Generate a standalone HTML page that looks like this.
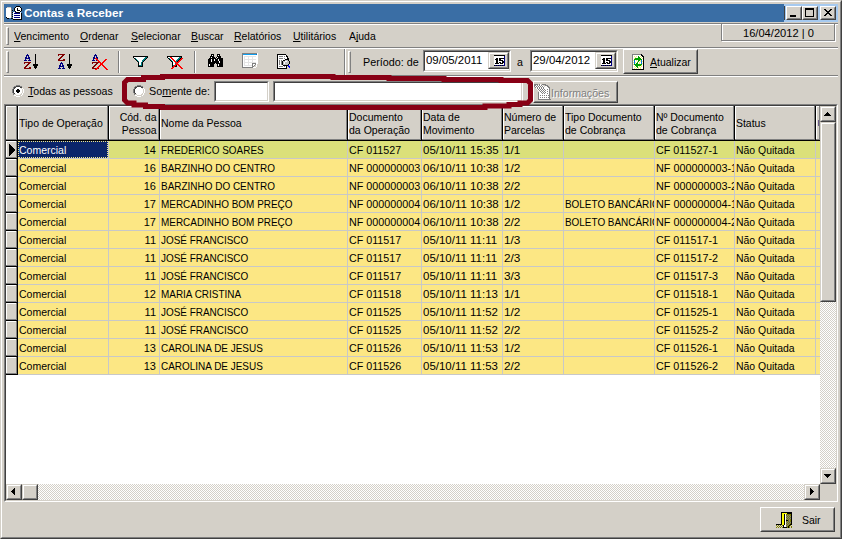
<!DOCTYPE html>
<html><head><meta charset="utf-8">
<style>
*{margin:0;padding:0;box-sizing:border-box}
html,body{width:842px;height:539px;overflow:hidden;background:#D4D0C8}
body{position:relative;font:11px "Liberation Sans",sans-serif;color:#000}
.a{position:absolute}
.t{position:absolute;white-space:pre;line-height:13px;font-size:11px;transform-origin:0 0}
.u{text-decoration:underline;text-decoration-skip-ink:none}
svg{position:absolute;overflow:visible}
.cl{position:absolute;overflow:hidden;white-space:pre;line-height:13px}
.cl span.s{display:inline-block;transform-origin:0 0}
.cl.r span.s{transform-origin:100% 0}
</style></head><body>
<div class="a" style="left:0px;top:0px;width:842px;height:539px;border-top:1px solid #D4D0C8;border-left:1px solid #D4D0C8;border-right:1px solid #404040;border-bottom:1px solid #404040"></div>
<div class="a" style="left:1px;top:1px;width:840px;height:537px;border-top:1px solid #FFFFFF;border-left:1px solid #FFFFFF;border-right:1px solid #808080;border-bottom:1px solid #808080"></div>
<div class="a" style="left:4px;top:4px;width:780px;height:18px;background:#3A6EA5;"></div>
<div class="a" style="left:784px;top:4px;width:54px;height:18px;background:#A6CAF0;"></div>
<div class="t" style="left:24px;top:7px;transform:scaleX(1.0650);color:#fff;font-weight:bold">Contas a Receber</div>
<svg style="left:6px;top:6px;opacity:1.0" width="16" height="14" shape-rendering="crispEdges"><rect x="10" y="0" width="4" height="1" fill="#000000"/><rect x="1" y="1" width="4" height="1" fill="#D4D0C8"/><rect x="9" y="1" width="1" height="1" fill="#000000"/><rect x="10" y="1" width="4" height="1" fill="#FFFFFF"/><rect x="14" y="1" width="1" height="1" fill="#000000"/><rect x="0" y="2" width="5" height="1" fill="#FFFFFF"/><rect x="5" y="2" width="1" height="1" fill="#808080"/><rect x="8" y="2" width="1" height="1" fill="#000000"/><rect x="9" y="2" width="2" height="1" fill="#FFFFFF"/><rect x="11" y="2" width="1" height="1" fill="#000000"/><rect x="12" y="2" width="3" height="1" fill="#FFFFFF"/><rect x="15" y="2" width="1" height="1" fill="#000000"/><rect x="0" y="3" width="5" height="1" fill="#FFFFFF"/><rect x="5" y="3" width="1" height="1" fill="#808080"/><rect x="8" y="3" width="1" height="1" fill="#000000"/><rect x="9" y="3" width="2" height="1" fill="#FFFFFF"/><rect x="11" y="3" width="1" height="1" fill="#000000"/><rect x="12" y="3" width="3" height="1" fill="#FFFFFF"/><rect x="15" y="3" width="1" height="1" fill="#000000"/><rect x="0" y="4" width="5" height="1" fill="#FFFFFF"/><rect x="5" y="4" width="1" height="1" fill="#808080"/><rect x="6" y="4" width="1" height="1" fill="#000000"/><rect x="8" y="4" width="1" height="1" fill="#000000"/><rect x="9" y="4" width="2" height="1" fill="#FFFFFF"/><rect x="11" y="4" width="3" height="1" fill="#000000"/><rect x="14" y="4" width="1" height="1" fill="#FFFFFF"/><rect x="15" y="4" width="1" height="1" fill="#000000"/><rect x="0" y="5" width="5" height="1" fill="#FFFFFF"/><rect x="5" y="5" width="1" height="1" fill="#808080"/><rect x="9" y="5" width="1" height="1" fill="#000000"/><rect x="10" y="5" width="4" height="1" fill="#FFFFFF"/><rect x="14" y="5" width="1" height="1" fill="#000000"/><rect x="0" y="6" width="5" height="1" fill="#FFFFFF"/><rect x="5" y="6" width="1" height="1" fill="#808080"/><rect x="6" y="6" width="1" height="1" fill="#000000"/><rect x="7" y="6" width="2" height="1" fill="#FFFFFF"/><rect x="9" y="6" width="1" height="1" fill="#000080"/><rect x="10" y="6" width="4" height="1" fill="#000000"/><rect x="14" y="6" width="1" height="1" fill="#FFFFFF"/><rect x="0" y="7" width="5" height="1" fill="#FFFFFF"/><rect x="5" y="7" width="1" height="1" fill="#808080"/><rect x="7" y="7" width="1" height="1" fill="#FFFFFF"/><rect x="8" y="7" width="6" height="1" fill="#000080"/><rect x="14" y="7" width="1" height="1" fill="#FFFFFF"/><rect x="15" y="7" width="1" height="1" fill="#000000"/><rect x="0" y="8" width="5" height="1" fill="#FFFFFF"/><rect x="5" y="8" width="1" height="1" fill="#808080"/><rect x="6" y="8" width="1" height="1" fill="#000000"/><rect x="7" y="8" width="8" height="1" fill="#FFFFFF"/><rect x="15" y="8" width="1" height="1" fill="#000000"/><rect x="0" y="9" width="5" height="1" fill="#FFFFFF"/><rect x="5" y="9" width="1" height="1" fill="#808080"/><rect x="7" y="9" width="1" height="1" fill="#FFFFFF"/><rect x="8" y="9" width="6" height="1" fill="#000080"/><rect x="14" y="9" width="1" height="1" fill="#FFFFFF"/><rect x="15" y="9" width="1" height="1" fill="#000000"/><rect x="0" y="10" width="5" height="1" fill="#FFFFFF"/><rect x="5" y="10" width="1" height="1" fill="#808080"/><rect x="6" y="10" width="1" height="1" fill="#000000"/><rect x="7" y="10" width="8" height="1" fill="#FFFFFF"/><rect x="15" y="10" width="1" height="1" fill="#000000"/><rect x="0" y="11" width="1" height="1" fill="#000000"/><rect x="1" y="11" width="4" height="1" fill="#FFFFFF"/><rect x="5" y="11" width="1" height="1" fill="#808080"/><rect x="7" y="11" width="1" height="1" fill="#FFFFFF"/><rect x="8" y="11" width="6" height="1" fill="#000080"/><rect x="14" y="11" width="1" height="1" fill="#FFFFFF"/><rect x="15" y="11" width="1" height="1" fill="#000000"/><rect x="1" y="12" width="2" height="1" fill="#000000"/><rect x="5" y="12" width="2" height="1" fill="#000000"/><rect x="7" y="12" width="8" height="1" fill="#FFFFFF"/><rect x="15" y="12" width="1" height="1" fill="#000000"/><rect x="7" y="13" width="9" height="1" fill="#000000"/></svg>
<div class="a" style="left:786px;top:6px;width:16px;height:14px;background:#D4D0C8;border-top:1px solid #FFFFFF;border-left:1px solid #FFFFFF;border-right:1px solid #404040;border-bottom:1px solid #404040"></div>
<div class="a" style="left:787px;top:7px;width:14px;height:12px;border-top:1px solid #D4D0C8;border-left:1px solid #D4D0C8;border-right:1px solid #808080;border-bottom:1px solid #808080"></div>
<div class="a" style="left:802px;top:6px;width:16px;height:14px;background:#D4D0C8;border-top:1px solid #FFFFFF;border-left:1px solid #FFFFFF;border-right:1px solid #404040;border-bottom:1px solid #404040"></div>
<div class="a" style="left:803px;top:7px;width:14px;height:12px;border-top:1px solid #D4D0C8;border-left:1px solid #D4D0C8;border-right:1px solid #808080;border-bottom:1px solid #808080"></div>
<div class="a" style="left:820px;top:6px;width:16px;height:14px;background:#D4D0C8;border-top:1px solid #FFFFFF;border-left:1px solid #FFFFFF;border-right:1px solid #404040;border-bottom:1px solid #404040"></div>
<div class="a" style="left:821px;top:7px;width:14px;height:12px;border-top:1px solid #D4D0C8;border-left:1px solid #D4D0C8;border-right:1px solid #808080;border-bottom:1px solid #808080"></div>
<div class="a" style="left:784px;top:6px;width:1px;height:14px;background:#404040;"></div>
<svg style="left:790px;top:15px;opacity:1.0" width="6" height="2" shape-rendering="crispEdges"><rect x="0" y="0" width="6" height="1" fill="#000000"/><rect x="0" y="1" width="6" height="1" fill="#000000"/></svg>
<svg style="left:805px;top:8px;opacity:1.0" width="9" height="9" shape-rendering="crispEdges"><rect x="0" y="0" width="9" height="1" fill="#000000"/><rect x="0" y="1" width="9" height="1" fill="#000000"/><rect x="0" y="2" width="1" height="1" fill="#000000"/><rect x="8" y="2" width="1" height="1" fill="#000000"/><rect x="0" y="3" width="1" height="1" fill="#000000"/><rect x="8" y="3" width="1" height="1" fill="#000000"/><rect x="0" y="4" width="1" height="1" fill="#000000"/><rect x="8" y="4" width="1" height="1" fill="#000000"/><rect x="0" y="5" width="1" height="1" fill="#000000"/><rect x="8" y="5" width="1" height="1" fill="#000000"/><rect x="0" y="6" width="1" height="1" fill="#000000"/><rect x="8" y="6" width="1" height="1" fill="#000000"/><rect x="0" y="7" width="1" height="1" fill="#000000"/><rect x="8" y="7" width="1" height="1" fill="#000000"/><rect x="0" y="8" width="9" height="1" fill="#000000"/></svg>
<svg style="left:824px;top:9px;opacity:1.0" width="8" height="7" shape-rendering="crispEdges"><rect x="0" y="0" width="2" height="1" fill="#000000"/><rect x="6" y="0" width="2" height="1" fill="#000000"/><rect x="1" y="1" width="2" height="1" fill="#000000"/><rect x="5" y="1" width="2" height="1" fill="#000000"/><rect x="2" y="2" width="4" height="1" fill="#000000"/><rect x="3" y="3" width="2" height="1" fill="#000000"/><rect x="2" y="4" width="4" height="1" fill="#000000"/><rect x="1" y="5" width="2" height="1" fill="#000000"/><rect x="5" y="5" width="2" height="1" fill="#000000"/><rect x="0" y="6" width="2" height="1" fill="#000000"/><rect x="6" y="6" width="2" height="1" fill="#000000"/></svg>
<div class="a" style="left:4px;top:23px;width:834px;height:1px;background:#808080;"></div>
<div class="a" style="left:4px;top:24px;width:834px;height:1px;background:#FFFFFF;"></div>
<div class="a" style="left:4px;top:47px;width:834px;height:1px;background:#808080;"></div>
<div class="a" style="left:4px;top:48px;width:834px;height:1px;background:#FFFFFF;"></div>
<div class="a" style="left:6px;top:27px;width:3px;height:18px;background:#D4D0C8;border-top:1px solid #FFFFFF;border-left:1px solid #FFFFFF;border-right:1px solid #808080;border-bottom:1px solid #808080"></div>
<div class="t" style="left:14px;top:30px;transform:scaleX(0.9568);"><span class="u">V</span>encimento</div>
<div class="t" style="left:80px;top:30px;transform:scaleX(0.9512);"><span class="u">O</span>rdenar</div>
<div class="t" style="left:131px;top:30px;transform:scaleX(0.9558);"><span class="u">S</span>elecionar</div>
<div class="t" style="left:191px;top:30px;transform:scaleX(0.9511);"><span class="u">B</span>uscar</div>
<div class="t" style="left:234px;top:30px;transform:scaleX(0.9546);"><span class="u">R</span>elatórios</div>
<div class="t" style="left:293px;top:30px;transform:scaleX(0.9536);"><span class="u">U</span>tilitários</div>
<div class="t" style="left:349px;top:30px;transform:scaleX(0.9480);">A<span class="u">j</span>uda</div>
<div class="a" style="left:722px;top:24px;width:114px;height:18px;border-top:1px solid #FFFFFF;border-left:1px solid #FFFFFF;border-right:1px solid #FFFFFF;border-bottom:1px solid #FFFFFF"></div>
<div class="a" style="left:721px;top:23px;width:114px;height:18px;border-top:1px solid #808080;border-left:1px solid #808080;border-right:1px solid #808080;border-bottom:1px solid #808080"></div>
<div class="t" style="left:743px;top:27px;transform:scaleX(1.0099);">16/04/2012 | 0</div>
<div class="a" style="left:4px;top:75px;width:834px;height:1px;background:#808080;"></div>
<div class="a" style="left:4px;top:76px;width:834px;height:1px;background:#FFFFFF;"></div>
<div class="a" style="left:6px;top:51px;width:3px;height:22px;background:#D4D0C8;border-top:1px solid #FFFFFF;border-left:1px solid #FFFFFF;border-right:1px solid #808080;border-bottom:1px solid #808080"></div>
<div class="a" style="left:118px;top:51px;width:1px;height:22px;background:#808080;"></div>
<div class="a" style="left:119px;top:51px;width:1px;height:22px;background:#FFFFFF;"></div>
<div class="a" style="left:194px;top:51px;width:1px;height:22px;background:#808080;"></div>
<div class="a" style="left:195px;top:51px;width:1px;height:22px;background:#FFFFFF;"></div>
<div class="a" style="left:344px;top:49px;width:1px;height:26px;background:#808080;"></div>
<div class="a" style="left:345px;top:49px;width:1px;height:26px;background:#FFFFFF;"></div>
<div class="a" style="left:348px;top:51px;width:3px;height:22px;background:#D4D0C8;border-top:1px solid #FFFFFF;border-left:1px solid #FFFFFF;border-right:1px solid #808080;border-bottom:1px solid #808080"></div>
<div class="t" style="left:363px;top:56px;transform:scaleX(0.9792);">Período: de</div>
<div class="t" style="left:517px;top:56px;transform:scaleX(0.9650);">a</div>
<div class="a" style="left:423px;top:50px;width:88px;height:22px;background:#FFFFFF;border-top:1px solid #808080;border-left:1px solid #808080;border-right:1px solid #FFFFFF;border-bottom:1px solid #FFFFFF"></div>
<div class="a" style="left:424px;top:51px;width:86px;height:20px;border-top:1px solid #404040;border-left:1px solid #404040;border-right:1px solid #D4D0C8;border-bottom:1px solid #D4D0C8"></div>
<div class="t" style="left:426px;top:54px;transform:scaleX(1.0389);">09/05/2011</div>
<div class="a" style="left:488px;top:52px;width:21px;height:17px;background:#D4D0C8;border-top:1px solid #D4D0C8;border-left:1px solid #D4D0C8;border-right:1px solid #404040;border-bottom:1px solid #404040"></div>
<div class="a" style="left:489px;top:53px;width:19px;height:15px;border-top:1px solid #FFFFFF;border-left:1px solid #FFFFFF;border-right:1px solid #808080;border-bottom:1px solid #808080"></div>
<svg style="left:494px;top:55px;opacity:1.0" width="11" height="11" shape-rendering="crispEdges"><rect x="0" y="0" width="11" height="1" fill="#000000"/><rect x="0" y="1" width="10" height="1" fill="#FFFFFF"/><rect x="10" y="1" width="1" height="1" fill="#000080"/><rect x="0" y="2" width="10" height="1" fill="#FFFFFF"/><rect x="10" y="2" width="1" height="1" fill="#000080"/><rect x="0" y="3" width="2" height="1" fill="#FFFFFF"/><rect x="2" y="3" width="2" height="1" fill="#000000"/><rect x="4" y="3" width="1" height="1" fill="#FFFFFF"/><rect x="5" y="3" width="5" height="1" fill="#000000"/><rect x="10" y="3" width="1" height="1" fill="#000080"/><rect x="0" y="4" width="1" height="1" fill="#FFFFFF"/><rect x="1" y="4" width="3" height="1" fill="#000000"/><rect x="4" y="4" width="1" height="1" fill="#FFFFFF"/><rect x="5" y="4" width="2" height="1" fill="#000000"/><rect x="7" y="4" width="3" height="1" fill="#FFFFFF"/><rect x="10" y="4" width="1" height="1" fill="#000080"/><rect x="0" y="5" width="2" height="1" fill="#FFFFFF"/><rect x="2" y="5" width="2" height="1" fill="#000000"/><rect x="4" y="5" width="1" height="1" fill="#FFFFFF"/><rect x="5" y="5" width="4" height="1" fill="#000000"/><rect x="9" y="5" width="1" height="1" fill="#FFFFFF"/><rect x="10" y="5" width="1" height="1" fill="#000080"/><rect x="0" y="6" width="2" height="1" fill="#FFFFFF"/><rect x="2" y="6" width="2" height="1" fill="#000000"/><rect x="4" y="6" width="4" height="1" fill="#FFFFFF"/><rect x="8" y="6" width="2" height="1" fill="#000000"/><rect x="10" y="6" width="1" height="1" fill="#000080"/><rect x="0" y="7" width="2" height="1" fill="#FFFFFF"/><rect x="2" y="7" width="2" height="1" fill="#000000"/><rect x="4" y="7" width="1" height="1" fill="#FFFFFF"/><rect x="5" y="7" width="2" height="1" fill="#000000"/><rect x="7" y="7" width="1" height="1" fill="#FFFFFF"/><rect x="8" y="7" width="2" height="1" fill="#000000"/><rect x="10" y="7" width="1" height="1" fill="#000080"/><rect x="0" y="8" width="1" height="1" fill="#FFFFFF"/><rect x="1" y="8" width="4" height="1" fill="#000000"/><rect x="5" y="8" width="1" height="1" fill="#FFFFFF"/><rect x="6" y="8" width="3" height="1" fill="#000000"/><rect x="9" y="8" width="1" height="1" fill="#FFFFFF"/><rect x="10" y="8" width="1" height="1" fill="#000080"/><rect x="0" y="9" width="10" height="1" fill="#FFFFFF"/><rect x="10" y="9" width="1" height="1" fill="#000080"/><rect x="0" y="10" width="1" height="1" fill="#000000"/><rect x="1" y="10" width="1" height="1" fill="#000080"/><rect x="2" y="10" width="1" height="1" fill="#000000"/><rect x="3" y="10" width="1" height="1" fill="#000080"/><rect x="4" y="10" width="1" height="1" fill="#000000"/><rect x="5" y="10" width="1" height="1" fill="#000080"/><rect x="6" y="10" width="1" height="1" fill="#000000"/><rect x="7" y="10" width="1" height="1" fill="#000080"/><rect x="8" y="10" width="1" height="1" fill="#000000"/><rect x="9" y="10" width="2" height="1" fill="#000080"/></svg>
<div class="a" style="left:530px;top:50px;width:88px;height:22px;background:#FFFFFF;border-top:1px solid #808080;border-left:1px solid #808080;border-right:1px solid #FFFFFF;border-bottom:1px solid #FFFFFF"></div>
<div class="a" style="left:531px;top:51px;width:86px;height:20px;border-top:1px solid #404040;border-left:1px solid #404040;border-right:1px solid #D4D0C8;border-bottom:1px solid #D4D0C8"></div>
<div class="t" style="left:533px;top:54px;transform:scaleX(1.0389);">29/04/2012</div>
<div class="a" style="left:595px;top:52px;width:21px;height:17px;background:#D4D0C8;border-top:1px solid #D4D0C8;border-left:1px solid #D4D0C8;border-right:1px solid #404040;border-bottom:1px solid #404040"></div>
<div class="a" style="left:596px;top:53px;width:19px;height:15px;border-top:1px solid #FFFFFF;border-left:1px solid #FFFFFF;border-right:1px solid #808080;border-bottom:1px solid #808080"></div>
<svg style="left:601px;top:55px;opacity:1.0" width="11" height="11" shape-rendering="crispEdges"><rect x="0" y="0" width="11" height="1" fill="#000000"/><rect x="0" y="1" width="10" height="1" fill="#FFFFFF"/><rect x="10" y="1" width="1" height="1" fill="#000080"/><rect x="0" y="2" width="10" height="1" fill="#FFFFFF"/><rect x="10" y="2" width="1" height="1" fill="#000080"/><rect x="0" y="3" width="2" height="1" fill="#FFFFFF"/><rect x="2" y="3" width="2" height="1" fill="#000000"/><rect x="4" y="3" width="1" height="1" fill="#FFFFFF"/><rect x="5" y="3" width="5" height="1" fill="#000000"/><rect x="10" y="3" width="1" height="1" fill="#000080"/><rect x="0" y="4" width="1" height="1" fill="#FFFFFF"/><rect x="1" y="4" width="3" height="1" fill="#000000"/><rect x="4" y="4" width="1" height="1" fill="#FFFFFF"/><rect x="5" y="4" width="2" height="1" fill="#000000"/><rect x="7" y="4" width="3" height="1" fill="#FFFFFF"/><rect x="10" y="4" width="1" height="1" fill="#000080"/><rect x="0" y="5" width="2" height="1" fill="#FFFFFF"/><rect x="2" y="5" width="2" height="1" fill="#000000"/><rect x="4" y="5" width="1" height="1" fill="#FFFFFF"/><rect x="5" y="5" width="4" height="1" fill="#000000"/><rect x="9" y="5" width="1" height="1" fill="#FFFFFF"/><rect x="10" y="5" width="1" height="1" fill="#000080"/><rect x="0" y="6" width="2" height="1" fill="#FFFFFF"/><rect x="2" y="6" width="2" height="1" fill="#000000"/><rect x="4" y="6" width="4" height="1" fill="#FFFFFF"/><rect x="8" y="6" width="2" height="1" fill="#000000"/><rect x="10" y="6" width="1" height="1" fill="#000080"/><rect x="0" y="7" width="2" height="1" fill="#FFFFFF"/><rect x="2" y="7" width="2" height="1" fill="#000000"/><rect x="4" y="7" width="1" height="1" fill="#FFFFFF"/><rect x="5" y="7" width="2" height="1" fill="#000000"/><rect x="7" y="7" width="1" height="1" fill="#FFFFFF"/><rect x="8" y="7" width="2" height="1" fill="#000000"/><rect x="10" y="7" width="1" height="1" fill="#000080"/><rect x="0" y="8" width="1" height="1" fill="#FFFFFF"/><rect x="1" y="8" width="4" height="1" fill="#000000"/><rect x="5" y="8" width="1" height="1" fill="#FFFFFF"/><rect x="6" y="8" width="3" height="1" fill="#000000"/><rect x="9" y="8" width="1" height="1" fill="#FFFFFF"/><rect x="10" y="8" width="1" height="1" fill="#000080"/><rect x="0" y="9" width="10" height="1" fill="#FFFFFF"/><rect x="10" y="9" width="1" height="1" fill="#000080"/><rect x="0" y="10" width="1" height="1" fill="#000000"/><rect x="1" y="10" width="1" height="1" fill="#000080"/><rect x="2" y="10" width="1" height="1" fill="#000000"/><rect x="3" y="10" width="1" height="1" fill="#000080"/><rect x="4" y="10" width="1" height="1" fill="#000000"/><rect x="5" y="10" width="1" height="1" fill="#000080"/><rect x="6" y="10" width="1" height="1" fill="#000000"/><rect x="7" y="10" width="1" height="1" fill="#000080"/><rect x="8" y="10" width="1" height="1" fill="#000000"/><rect x="9" y="10" width="2" height="1" fill="#000080"/></svg>
<div class="a" style="left:623px;top:49px;width:75px;height:25px;background:#D4D0C8;border-top:1px solid #FFFFFF;border-left:1px solid #FFFFFF;border-right:1px solid #404040;border-bottom:1px solid #404040"></div>
<div class="a" style="left:624px;top:50px;width:73px;height:23px;border-top:1px solid #D4D0C8;border-left:1px solid #D4D0C8;border-right:1px solid #808080;border-bottom:1px solid #808080"></div>
<div class="t" style="left:650px;top:56px;transform:scaleX(0.9539);"><span class="u">A</span>tualizar</div>
<svg style="left:12px;top:85px;opacity:1.0" width="12" height="12" shape-rendering="crispEdges"><rect x="4" y="0" width="4" height="1" fill="#808080"/><rect x="2" y="1" width="2" height="1" fill="#808080"/><rect x="4" y="1" width="4" height="1" fill="#404040"/><rect x="8" y="1" width="2" height="1" fill="#808080"/><rect x="1" y="2" width="1" height="1" fill="#808080"/><rect x="2" y="2" width="2" height="1" fill="#404040"/><rect x="4" y="2" width="4" height="1" fill="#FFFFFF"/><rect x="8" y="2" width="2" height="1" fill="#404040"/><rect x="10" y="2" width="1" height="1" fill="#D4D0C8"/><rect x="1" y="3" width="1" height="1" fill="#808080"/><rect x="2" y="3" width="1" height="1" fill="#404040"/><rect x="3" y="3" width="6" height="1" fill="#FFFFFF"/><rect x="9" y="3" width="1" height="1" fill="#D4D0C8"/><rect x="10" y="3" width="1" height="1" fill="#FFFFFF"/><rect x="0" y="4" width="1" height="1" fill="#808080"/><rect x="1" y="4" width="1" height="1" fill="#404040"/><rect x="2" y="4" width="3" height="1" fill="#FFFFFF"/><rect x="5" y="4" width="2" height="1" fill="#000000"/><rect x="7" y="4" width="3" height="1" fill="#FFFFFF"/><rect x="10" y="4" width="1" height="1" fill="#D4D0C8"/><rect x="11" y="4" width="1" height="1" fill="#FFFFFF"/><rect x="0" y="5" width="1" height="1" fill="#808080"/><rect x="1" y="5" width="1" height="1" fill="#404040"/><rect x="2" y="5" width="2" height="1" fill="#FFFFFF"/><rect x="4" y="5" width="4" height="1" fill="#000000"/><rect x="8" y="5" width="2" height="1" fill="#FFFFFF"/><rect x="10" y="5" width="1" height="1" fill="#D4D0C8"/><rect x="11" y="5" width="1" height="1" fill="#FFFFFF"/><rect x="0" y="6" width="1" height="1" fill="#808080"/><rect x="1" y="6" width="1" height="1" fill="#404040"/><rect x="2" y="6" width="2" height="1" fill="#FFFFFF"/><rect x="4" y="6" width="4" height="1" fill="#000000"/><rect x="8" y="6" width="2" height="1" fill="#FFFFFF"/><rect x="10" y="6" width="1" height="1" fill="#D4D0C8"/><rect x="11" y="6" width="1" height="1" fill="#FFFFFF"/><rect x="0" y="7" width="1" height="1" fill="#808080"/><rect x="1" y="7" width="1" height="1" fill="#404040"/><rect x="2" y="7" width="3" height="1" fill="#FFFFFF"/><rect x="5" y="7" width="2" height="1" fill="#000000"/><rect x="7" y="7" width="3" height="1" fill="#FFFFFF"/><rect x="10" y="7" width="1" height="1" fill="#D4D0C8"/><rect x="11" y="7" width="1" height="1" fill="#FFFFFF"/><rect x="1" y="8" width="1" height="1" fill="#808080"/><rect x="2" y="8" width="1" height="1" fill="#404040"/><rect x="3" y="8" width="6" height="1" fill="#FFFFFF"/><rect x="9" y="8" width="1" height="1" fill="#D4D0C8"/><rect x="10" y="8" width="1" height="1" fill="#FFFFFF"/><rect x="1" y="9" width="1" height="1" fill="#808080"/><rect x="2" y="9" width="2" height="1" fill="#D4D0C8"/><rect x="4" y="9" width="4" height="1" fill="#FFFFFF"/><rect x="8" y="9" width="2" height="1" fill="#D4D0C8"/><rect x="10" y="9" width="1" height="1" fill="#FFFFFF"/><rect x="2" y="10" width="2" height="1" fill="#FFFFFF"/><rect x="4" y="10" width="5" height="1" fill="#D4D0C8"/><rect x="9" y="10" width="1" height="1" fill="#FFFFFF"/><rect x="4" y="11" width="4" height="1" fill="#FFFFFF"/></svg>
<div class="t" style="left:28px;top:85px;transform:scaleX(0.9625);"><span class="u">T</span>odas as pessoas</div>
<svg style="left:133px;top:85px;opacity:1.0" width="12" height="12" shape-rendering="crispEdges"><rect x="4" y="0" width="4" height="1" fill="#808080"/><rect x="2" y="1" width="2" height="1" fill="#808080"/><rect x="4" y="1" width="4" height="1" fill="#404040"/><rect x="8" y="1" width="2" height="1" fill="#808080"/><rect x="1" y="2" width="1" height="1" fill="#808080"/><rect x="2" y="2" width="2" height="1" fill="#404040"/><rect x="4" y="2" width="4" height="1" fill="#FFFFFF"/><rect x="8" y="2" width="2" height="1" fill="#404040"/><rect x="10" y="2" width="1" height="1" fill="#D4D0C8"/><rect x="1" y="3" width="1" height="1" fill="#808080"/><rect x="2" y="3" width="1" height="1" fill="#404040"/><rect x="3" y="3" width="6" height="1" fill="#FFFFFF"/><rect x="9" y="3" width="1" height="1" fill="#D4D0C8"/><rect x="10" y="3" width="1" height="1" fill="#FFFFFF"/><rect x="0" y="4" width="1" height="1" fill="#808080"/><rect x="1" y="4" width="1" height="1" fill="#404040"/><rect x="2" y="4" width="8" height="1" fill="#FFFFFF"/><rect x="10" y="4" width="1" height="1" fill="#D4D0C8"/><rect x="11" y="4" width="1" height="1" fill="#FFFFFF"/><rect x="0" y="5" width="1" height="1" fill="#808080"/><rect x="1" y="5" width="1" height="1" fill="#404040"/><rect x="2" y="5" width="8" height="1" fill="#FFFFFF"/><rect x="10" y="5" width="1" height="1" fill="#D4D0C8"/><rect x="11" y="5" width="1" height="1" fill="#FFFFFF"/><rect x="0" y="6" width="1" height="1" fill="#808080"/><rect x="1" y="6" width="1" height="1" fill="#404040"/><rect x="2" y="6" width="8" height="1" fill="#FFFFFF"/><rect x="10" y="6" width="1" height="1" fill="#D4D0C8"/><rect x="11" y="6" width="1" height="1" fill="#FFFFFF"/><rect x="0" y="7" width="1" height="1" fill="#808080"/><rect x="1" y="7" width="1" height="1" fill="#404040"/><rect x="2" y="7" width="8" height="1" fill="#FFFFFF"/><rect x="10" y="7" width="1" height="1" fill="#D4D0C8"/><rect x="11" y="7" width="1" height="1" fill="#FFFFFF"/><rect x="1" y="8" width="1" height="1" fill="#808080"/><rect x="2" y="8" width="1" height="1" fill="#404040"/><rect x="3" y="8" width="6" height="1" fill="#FFFFFF"/><rect x="9" y="8" width="1" height="1" fill="#D4D0C8"/><rect x="10" y="8" width="1" height="1" fill="#FFFFFF"/><rect x="1" y="9" width="1" height="1" fill="#808080"/><rect x="2" y="9" width="2" height="1" fill="#D4D0C8"/><rect x="4" y="9" width="4" height="1" fill="#FFFFFF"/><rect x="8" y="9" width="2" height="1" fill="#D4D0C8"/><rect x="10" y="9" width="1" height="1" fill="#FFFFFF"/><rect x="2" y="10" width="2" height="1" fill="#FFFFFF"/><rect x="4" y="10" width="5" height="1" fill="#D4D0C8"/><rect x="9" y="10" width="1" height="1" fill="#FFFFFF"/><rect x="4" y="11" width="4" height="1" fill="#FFFFFF"/></svg>
<div class="t" style="left:149px;top:85px;transform:scaleX(0.9780);">So<span class="u">m</span>ente de:</div>
<div class="a" style="left:214px;top:81px;width:55px;height:21px;background:#FFFFFF;border-top:1px solid #808080;border-left:1px solid #808080;border-right:1px solid #FFFFFF;border-bottom:1px solid #FFFFFF"></div>
<div class="a" style="left:215px;top:82px;width:53px;height:19px;border-top:1px solid #404040;border-left:1px solid #404040;border-right:1px solid #D4D0C8;border-bottom:1px solid #D4D0C8"></div>
<div class="a" style="left:273px;top:81px;width:250px;height:21px;background:#FFFFFF;border-top:1px solid #808080;border-left:1px solid #808080;border-right:1px solid #FFFFFF;border-bottom:1px solid #FFFFFF"></div>
<div class="a" style="left:274px;top:82px;width:248px;height:19px;border-top:1px solid #404040;border-left:1px solid #404040;border-right:1px solid #D4D0C8;border-bottom:1px solid #D4D0C8"></div>
<div class="a" style="left:533px;top:81px;width:85px;height:22px;background:#D4D0C8;border-top:1px solid #FFFFFF;border-left:1px solid #FFFFFF;border-right:1px solid #404040;border-bottom:1px solid #404040"></div>
<div class="a" style="left:534px;top:82px;width:83px;height:20px;border-top:1px solid #D4D0C8;border-left:1px solid #D4D0C8;border-right:1px solid #808080;border-bottom:1px solid #808080"></div>
<div class="t" style="left:552px;top:88px;color:#fff;transform:scaleX(0.9617)">Informações</div>
<div class="t" style="left:551px;top:87px;color:#808080;transform:scaleX(0.9617)">Informações</div>
<div class="a" style="left:4px;top:104px;width:834px;height:398px;border-top:1px solid #808080;border-left:1px solid #808080;border-right:1px solid #FFFFFF;border-bottom:1px solid #FFFFFF"></div>
<div class="a" style="left:5px;top:105px;width:832px;height:396px;background:#FFFFFF;border-top:1px solid #404040;border-left:1px solid #404040;border-right:1px solid #D4D0C8;border-bottom:1px solid #D4D0C8"></div>
<div class="a" style="left:6px;top:106px;width:814px;height:34px;background:#D4D0C8;"></div>
<div class="a" style="left:6px;top:106px;width:11px;height:1px;background:#FFFFFF;"></div>
<div class="a" style="left:6px;top:106px;width:1px;height:34px;background:#FFFFFF;"></div>
<div class="a" style="left:6px;top:139px;width:11px;height:1px;background:#808080;"></div>
<div class="a" style="left:16px;top:106px;width:1px;height:34px;background:#808080;"></div>
<div class="a" style="left:18px;top:106px;width:90px;height:1px;background:#FFFFFF;"></div>
<div class="a" style="left:18px;top:106px;width:1px;height:34px;background:#FFFFFF;"></div>
<div class="a" style="left:18px;top:139px;width:90px;height:1px;background:#808080;"></div>
<div class="a" style="left:107px;top:106px;width:1px;height:34px;background:#808080;"></div>
<div class="a" style="left:109px;top:106px;width:50px;height:1px;background:#FFFFFF;"></div>
<div class="a" style="left:109px;top:106px;width:1px;height:34px;background:#FFFFFF;"></div>
<div class="a" style="left:109px;top:139px;width:50px;height:1px;background:#808080;"></div>
<div class="a" style="left:158px;top:106px;width:1px;height:34px;background:#808080;"></div>
<div class="a" style="left:160px;top:106px;width:187px;height:1px;background:#FFFFFF;"></div>
<div class="a" style="left:160px;top:106px;width:1px;height:34px;background:#FFFFFF;"></div>
<div class="a" style="left:160px;top:139px;width:187px;height:1px;background:#808080;"></div>
<div class="a" style="left:346px;top:106px;width:1px;height:34px;background:#808080;"></div>
<div class="a" style="left:348px;top:106px;width:73px;height:1px;background:#FFFFFF;"></div>
<div class="a" style="left:348px;top:106px;width:1px;height:34px;background:#FFFFFF;"></div>
<div class="a" style="left:348px;top:139px;width:73px;height:1px;background:#808080;"></div>
<div class="a" style="left:420px;top:106px;width:1px;height:34px;background:#808080;"></div>
<div class="a" style="left:422px;top:106px;width:80px;height:1px;background:#FFFFFF;"></div>
<div class="a" style="left:422px;top:106px;width:1px;height:34px;background:#FFFFFF;"></div>
<div class="a" style="left:422px;top:139px;width:80px;height:1px;background:#808080;"></div>
<div class="a" style="left:501px;top:106px;width:1px;height:34px;background:#808080;"></div>
<div class="a" style="left:503px;top:106px;width:60px;height:1px;background:#FFFFFF;"></div>
<div class="a" style="left:503px;top:106px;width:1px;height:34px;background:#FFFFFF;"></div>
<div class="a" style="left:503px;top:139px;width:60px;height:1px;background:#808080;"></div>
<div class="a" style="left:562px;top:106px;width:1px;height:34px;background:#808080;"></div>
<div class="a" style="left:564px;top:106px;width:90px;height:1px;background:#FFFFFF;"></div>
<div class="a" style="left:564px;top:106px;width:1px;height:34px;background:#FFFFFF;"></div>
<div class="a" style="left:564px;top:139px;width:90px;height:1px;background:#808080;"></div>
<div class="a" style="left:653px;top:106px;width:1px;height:34px;background:#808080;"></div>
<div class="a" style="left:655px;top:106px;width:79px;height:1px;background:#FFFFFF;"></div>
<div class="a" style="left:655px;top:106px;width:1px;height:34px;background:#FFFFFF;"></div>
<div class="a" style="left:655px;top:139px;width:79px;height:1px;background:#808080;"></div>
<div class="a" style="left:733px;top:106px;width:1px;height:34px;background:#808080;"></div>
<div class="a" style="left:735px;top:106px;width:80px;height:1px;background:#FFFFFF;"></div>
<div class="a" style="left:735px;top:106px;width:1px;height:34px;background:#FFFFFF;"></div>
<div class="a" style="left:735px;top:139px;width:80px;height:1px;background:#808080;"></div>
<div class="a" style="left:814px;top:106px;width:1px;height:34px;background:#808080;"></div>
<div class="a" style="left:816px;top:106px;width:4px;height:1px;background:#FFFFFF;"></div>
<div class="a" style="left:816px;top:106px;width:1px;height:34px;background:#FFFFFF;"></div>
<div class="a" style="left:816px;top:139px;width:4px;height:1px;background:#808080;"></div>
<div class="a" style="left:819px;top:106px;width:1px;height:34px;background:#808080;"></div>
<div class="a" style="left:17px;top:106px;width:1px;height:34px;background:#000;"></div>
<div class="a" style="left:108px;top:106px;width:1px;height:34px;background:#000;"></div>
<div class="a" style="left:159px;top:106px;width:1px;height:34px;background:#000;"></div>
<div class="a" style="left:347px;top:106px;width:1px;height:34px;background:#000;"></div>
<div class="a" style="left:421px;top:106px;width:1px;height:34px;background:#000;"></div>
<div class="a" style="left:502px;top:106px;width:1px;height:34px;background:#000;"></div>
<div class="a" style="left:563px;top:106px;width:1px;height:34px;background:#000;"></div>
<div class="a" style="left:654px;top:106px;width:1px;height:34px;background:#000;"></div>
<div class="a" style="left:734px;top:106px;width:1px;height:34px;background:#000;"></div>
<div class="a" style="left:815px;top:106px;width:1px;height:34px;background:#000;"></div>
<div class="a" style="left:6px;top:140px;width:814px;height:1px;background:#000;"></div>
<div class="cl" style="left:18px;top:106px;width:89px;height:33px;padding:11px 0 0 1px;color:#000;"><span class="s" style="transform:scaleX(0.9562)">Tipo de Operação</span></div>
<div class="cl r" style="left:109px;top:106px;width:49px;height:33px;padding:5px 1px 0 0;text-align:right;color:#000;"><span class="s" style="transform:scaleX(0.9572)">Cód. da</span></div>
<div class="cl r" style="left:109px;top:106px;width:49px;height:33px;padding:18px 1px 0 0;text-align:right;color:#000;"><span class="s" style="transform:scaleX(0.9520)">Pessoa</span></div>
<div class="cl" style="left:160px;top:106px;width:186px;height:33px;padding:11px 0 0 1px;color:#000;"><span class="s" style="transform:scaleX(0.9558)">Nome da Pessoa</span></div>
<div class="cl" style="left:348px;top:106px;width:72px;height:33px;padding:5px 0 0 1px;color:#000;"><span class="s" style="transform:scaleX(0.9558)">Documento</span></div>
<div class="cl" style="left:348px;top:106px;width:72px;height:33px;padding:18px 0 0 1px;color:#000;"><span class="s" style="transform:scaleX(0.9579)">da Operação</span></div>
<div class="cl" style="left:422px;top:106px;width:79px;height:33px;padding:5px 0 0 1px;color:#000;"><span class="s" style="transform:scaleX(0.9544)">Data de</span></div>
<div class="cl" style="left:422px;top:106px;width:79px;height:33px;padding:18px 0 0 1px;color:#000;"><span class="s" style="transform:scaleX(0.9539)">Movimento</span></div>
<div class="cl" style="left:503px;top:106px;width:59px;height:33px;padding:5px 0 0 1px;color:#000;"><span class="s" style="transform:scaleX(0.9575)">Número de</span></div>
<div class="cl" style="left:503px;top:106px;width:59px;height:33px;padding:18px 0 0 1px;color:#000;"><span class="s" style="transform:scaleX(0.9539)">Parcelas</span></div>
<div class="cl" style="left:564px;top:106px;width:89px;height:33px;padding:5px 0 0 1px;color:#000;"><span class="s" style="transform:scaleX(0.9545)">Tipo Documento</span></div>
<div class="cl" style="left:564px;top:106px;width:89px;height:33px;padding:18px 0 0 1px;color:#000;"><span class="s" style="transform:scaleX(0.9585)">de Cobrança</span></div>
<div class="cl" style="left:655px;top:106px;width:78px;height:33px;padding:5px 0 0 1px;color:#000;"><span class="s" style="transform:scaleX(0.9520)">Nº Documento</span></div>
<div class="cl" style="left:655px;top:106px;width:78px;height:33px;padding:18px 0 0 1px;color:#000;"><span class="s" style="transform:scaleX(0.9585)">de Cobrança</span></div>
<div class="cl" style="left:735px;top:106px;width:79px;height:33px;padding:11px 0 0 1px;color:#000;"><span class="s" style="transform:scaleX(0.9497)">Status</span></div>
<div class="a" style="left:18px;top:141px;width:802px;height:17px;background:#DBE07A;"></div>
<div class="a" style="left:18px;top:158px;width:802px;height:1px;background:#C8C8C8;"></div>
<div class="a" style="left:6px;top:141px;width:11px;height:17px;background:#D4D0C8;"></div>
<div class="a" style="left:6px;top:141px;width:11px;height:1px;background:#FFFFFF;"></div>
<div class="a" style="left:6px;top:141px;width:1px;height:17px;background:#FFFFFF;"></div>
<div class="a" style="left:6px;top:157px;width:11px;height:1px;background:#808080;"></div>
<div class="a" style="left:16px;top:141px;width:1px;height:17px;background:#808080;"></div>
<div class="a" style="left:6px;top:158px;width:12px;height:1px;background:#000;"></div>
<div class="a" style="left:17px;top:141px;width:1px;height:18px;background:#000;"></div>
<div class="a" style="left:18px;top:141px;width:90px;height:17px;background:#0A246A;"></div>
<div class="a" style="left:18px;top:141px;width:90px;height:17px;border:1px dotted #F0E68C"></div>
<div class="cl" style="left:18px;top:141px;width:90px;height:17px;padding:3px 0 0 1px;color:#fff;"><span class="s" style="transform:scaleX(0.9546)">Comercial</span></div>
<div class="cl r" style="left:109px;top:141px;width:50px;height:17px;padding:3px 3px 0 0;text-align:right;color:#000;"><span class="s" style="transform:scaleX(1.0000)">14</span></div>
<div class="cl" style="left:160px;top:141px;width:187px;height:17px;padding:3px 0 0 1px;color:#000;"><span class="s" style="transform:scaleX(0.9027)">FREDERICO SOARES</span></div>
<div class="cl" style="left:348px;top:141px;width:73px;height:17px;padding:3px 0 0 1px;color:#000;"><span class="s" style="transform:scaleX(0.9731)">CF 011527</span></div>
<div class="cl" style="left:422px;top:141px;width:80px;height:17px;padding:3px 0 0 1px;color:#000;"><span class="s" style="transform:scaleX(1.0437)">05/10/11 15:35</span></div>
<div class="cl" style="left:503px;top:141px;width:60px;height:17px;padding:3px 0 0 1px;color:#000;"><span class="s" style="transform:scaleX(1.0700)">1/1</span></div>
<div class="cl" style="left:655px;top:141px;width:79px;height:17px;padding:3px 0 0 1px;color:#000;"><span class="s" style="transform:scaleX(0.9772)">CF 011527-1</span></div>
<div class="cl" style="left:735px;top:141px;width:80px;height:17px;padding:3px 0 0 1px;color:#000;"><span class="s" style="transform:scaleX(0.9494)">Não Quitada</span></div>
<div class="a" style="left:18px;top:159px;width:802px;height:17px;background:#FCE784;"></div>
<div class="a" style="left:18px;top:176px;width:802px;height:1px;background:#C8C8C8;"></div>
<div class="a" style="left:6px;top:159px;width:11px;height:17px;background:#D4D0C8;"></div>
<div class="a" style="left:6px;top:159px;width:11px;height:1px;background:#FFFFFF;"></div>
<div class="a" style="left:6px;top:159px;width:1px;height:17px;background:#FFFFFF;"></div>
<div class="a" style="left:6px;top:175px;width:11px;height:1px;background:#808080;"></div>
<div class="a" style="left:16px;top:159px;width:1px;height:17px;background:#808080;"></div>
<div class="a" style="left:6px;top:176px;width:12px;height:1px;background:#000;"></div>
<div class="a" style="left:17px;top:159px;width:1px;height:18px;background:#000;"></div>
<div class="cl" style="left:18px;top:159px;width:90px;height:17px;padding:3px 0 0 1px;color:#000;"><span class="s" style="transform:scaleX(0.9546)">Comercial</span></div>
<div class="cl r" style="left:109px;top:159px;width:50px;height:17px;padding:3px 3px 0 0;text-align:right;color:#000;"><span class="s" style="transform:scaleX(1.0000)">16</span></div>
<div class="cl" style="left:160px;top:159px;width:187px;height:17px;padding:3px 0 0 1px;color:#000;"><span class="s" style="transform:scaleX(0.9049)">BARZINHO DO CENTRO</span></div>
<div class="cl" style="left:348px;top:159px;width:73px;height:17px;padding:3px 0 0 1px;color:#000;"><span class="s" style="transform:scaleX(0.9799)">NF 000000003</span></div>
<div class="cl" style="left:422px;top:159px;width:80px;height:17px;padding:3px 0 0 1px;color:#000;"><span class="s" style="transform:scaleX(1.0437)">06/10/11 10:38</span></div>
<div class="cl" style="left:503px;top:159px;width:60px;height:17px;padding:3px 0 0 1px;color:#000;"><span class="s" style="transform:scaleX(1.0700)">1/2</span></div>
<div class="cl" style="left:655px;top:159px;width:79px;height:17px;padding:3px 0 0 1px;color:#000;"><span class="s" style="transform:scaleX(0.9823)">NF 000000003-1</span></div>
<div class="cl" style="left:735px;top:159px;width:80px;height:17px;padding:3px 0 0 1px;color:#000;"><span class="s" style="transform:scaleX(0.9494)">Não Quitada</span></div>
<div class="a" style="left:18px;top:177px;width:802px;height:17px;background:#FCE784;"></div>
<div class="a" style="left:18px;top:194px;width:802px;height:1px;background:#C8C8C8;"></div>
<div class="a" style="left:6px;top:177px;width:11px;height:17px;background:#D4D0C8;"></div>
<div class="a" style="left:6px;top:177px;width:11px;height:1px;background:#FFFFFF;"></div>
<div class="a" style="left:6px;top:177px;width:1px;height:17px;background:#FFFFFF;"></div>
<div class="a" style="left:6px;top:193px;width:11px;height:1px;background:#808080;"></div>
<div class="a" style="left:16px;top:177px;width:1px;height:17px;background:#808080;"></div>
<div class="a" style="left:6px;top:194px;width:12px;height:1px;background:#000;"></div>
<div class="a" style="left:17px;top:177px;width:1px;height:18px;background:#000;"></div>
<div class="cl" style="left:18px;top:177px;width:90px;height:17px;padding:3px 0 0 1px;color:#000;"><span class="s" style="transform:scaleX(0.9546)">Comercial</span></div>
<div class="cl r" style="left:109px;top:177px;width:50px;height:17px;padding:3px 3px 0 0;text-align:right;color:#000;"><span class="s" style="transform:scaleX(1.0000)">16</span></div>
<div class="cl" style="left:160px;top:177px;width:187px;height:17px;padding:3px 0 0 1px;color:#000;"><span class="s" style="transform:scaleX(0.9049)">BARZINHO DO CENTRO</span></div>
<div class="cl" style="left:348px;top:177px;width:73px;height:17px;padding:3px 0 0 1px;color:#000;"><span class="s" style="transform:scaleX(0.9799)">NF 000000003</span></div>
<div class="cl" style="left:422px;top:177px;width:80px;height:17px;padding:3px 0 0 1px;color:#000;"><span class="s" style="transform:scaleX(1.0437)">06/10/11 10:38</span></div>
<div class="cl" style="left:503px;top:177px;width:60px;height:17px;padding:3px 0 0 1px;color:#000;"><span class="s" style="transform:scaleX(1.0700)">2/2</span></div>
<div class="cl" style="left:655px;top:177px;width:79px;height:17px;padding:3px 0 0 1px;color:#000;"><span class="s" style="transform:scaleX(0.9823)">NF 000000003-2</span></div>
<div class="cl" style="left:735px;top:177px;width:80px;height:17px;padding:3px 0 0 1px;color:#000;"><span class="s" style="transform:scaleX(0.9494)">Não Quitada</span></div>
<div class="a" style="left:18px;top:195px;width:802px;height:17px;background:#FCE784;"></div>
<div class="a" style="left:18px;top:212px;width:802px;height:1px;background:#C8C8C8;"></div>
<div class="a" style="left:6px;top:195px;width:11px;height:17px;background:#D4D0C8;"></div>
<div class="a" style="left:6px;top:195px;width:11px;height:1px;background:#FFFFFF;"></div>
<div class="a" style="left:6px;top:195px;width:1px;height:17px;background:#FFFFFF;"></div>
<div class="a" style="left:6px;top:211px;width:11px;height:1px;background:#808080;"></div>
<div class="a" style="left:16px;top:195px;width:1px;height:17px;background:#808080;"></div>
<div class="a" style="left:6px;top:212px;width:12px;height:1px;background:#000;"></div>
<div class="a" style="left:17px;top:195px;width:1px;height:18px;background:#000;"></div>
<div class="cl" style="left:18px;top:195px;width:90px;height:17px;padding:3px 0 0 1px;color:#000;"><span class="s" style="transform:scaleX(0.9546)">Comercial</span></div>
<div class="cl r" style="left:109px;top:195px;width:50px;height:17px;padding:3px 3px 0 0;text-align:right;color:#000;"><span class="s" style="transform:scaleX(1.0000)">17</span></div>
<div class="cl" style="left:160px;top:195px;width:187px;height:17px;padding:3px 0 0 1px;color:#000;"><span class="s" style="transform:scaleX(0.9042)">MERCADINHO BOM PREÇO</span></div>
<div class="cl" style="left:348px;top:195px;width:73px;height:17px;padding:3px 0 0 1px;color:#000;"><span class="s" style="transform:scaleX(0.9799)">NF 000000004</span></div>
<div class="cl" style="left:422px;top:195px;width:80px;height:17px;padding:3px 0 0 1px;color:#000;"><span class="s" style="transform:scaleX(1.0437)">06/10/11 10:38</span></div>
<div class="cl" style="left:503px;top:195px;width:60px;height:17px;padding:3px 0 0 1px;color:#000;"><span class="s" style="transform:scaleX(1.0700)">1/2</span></div>
<div class="cl" style="left:564px;top:195px;width:90px;height:17px;padding:3px 0 0 1px;color:#000;"><span class="s" style="transform:scaleX(0.9029)">BOLETO BANCÁRIO</span></div>
<div class="cl" style="left:655px;top:195px;width:79px;height:17px;padding:3px 0 0 1px;color:#000;"><span class="s" style="transform:scaleX(0.9823)">NF 000000004-1</span></div>
<div class="cl" style="left:735px;top:195px;width:80px;height:17px;padding:3px 0 0 1px;color:#000;"><span class="s" style="transform:scaleX(0.9494)">Não Quitada</span></div>
<div class="a" style="left:18px;top:213px;width:802px;height:17px;background:#FCE784;"></div>
<div class="a" style="left:18px;top:230px;width:802px;height:1px;background:#C8C8C8;"></div>
<div class="a" style="left:6px;top:213px;width:11px;height:17px;background:#D4D0C8;"></div>
<div class="a" style="left:6px;top:213px;width:11px;height:1px;background:#FFFFFF;"></div>
<div class="a" style="left:6px;top:213px;width:1px;height:17px;background:#FFFFFF;"></div>
<div class="a" style="left:6px;top:229px;width:11px;height:1px;background:#808080;"></div>
<div class="a" style="left:16px;top:213px;width:1px;height:17px;background:#808080;"></div>
<div class="a" style="left:6px;top:230px;width:12px;height:1px;background:#000;"></div>
<div class="a" style="left:17px;top:213px;width:1px;height:18px;background:#000;"></div>
<div class="cl" style="left:18px;top:213px;width:90px;height:17px;padding:3px 0 0 1px;color:#000;"><span class="s" style="transform:scaleX(0.9546)">Comercial</span></div>
<div class="cl r" style="left:109px;top:213px;width:50px;height:17px;padding:3px 3px 0 0;text-align:right;color:#000;"><span class="s" style="transform:scaleX(1.0000)">17</span></div>
<div class="cl" style="left:160px;top:213px;width:187px;height:17px;padding:3px 0 0 1px;color:#000;"><span class="s" style="transform:scaleX(0.9042)">MERCADINHO BOM PREÇO</span></div>
<div class="cl" style="left:348px;top:213px;width:73px;height:17px;padding:3px 0 0 1px;color:#000;"><span class="s" style="transform:scaleX(0.9799)">NF 000000004</span></div>
<div class="cl" style="left:422px;top:213px;width:80px;height:17px;padding:3px 0 0 1px;color:#000;"><span class="s" style="transform:scaleX(1.0437)">06/10/11 10:38</span></div>
<div class="cl" style="left:503px;top:213px;width:60px;height:17px;padding:3px 0 0 1px;color:#000;"><span class="s" style="transform:scaleX(1.0700)">2/2</span></div>
<div class="cl" style="left:564px;top:213px;width:90px;height:17px;padding:3px 0 0 1px;color:#000;"><span class="s" style="transform:scaleX(0.9029)">BOLETO BANCÁRIO</span></div>
<div class="cl" style="left:655px;top:213px;width:79px;height:17px;padding:3px 0 0 1px;color:#000;"><span class="s" style="transform:scaleX(0.9823)">NF 000000004-2</span></div>
<div class="cl" style="left:735px;top:213px;width:80px;height:17px;padding:3px 0 0 1px;color:#000;"><span class="s" style="transform:scaleX(0.9494)">Não Quitada</span></div>
<div class="a" style="left:18px;top:231px;width:802px;height:17px;background:#FCE784;"></div>
<div class="a" style="left:18px;top:248px;width:802px;height:1px;background:#C8C8C8;"></div>
<div class="a" style="left:6px;top:231px;width:11px;height:17px;background:#D4D0C8;"></div>
<div class="a" style="left:6px;top:231px;width:11px;height:1px;background:#FFFFFF;"></div>
<div class="a" style="left:6px;top:231px;width:1px;height:17px;background:#FFFFFF;"></div>
<div class="a" style="left:6px;top:247px;width:11px;height:1px;background:#808080;"></div>
<div class="a" style="left:16px;top:231px;width:1px;height:17px;background:#808080;"></div>
<div class="a" style="left:6px;top:248px;width:12px;height:1px;background:#000;"></div>
<div class="a" style="left:17px;top:231px;width:1px;height:18px;background:#000;"></div>
<div class="cl" style="left:18px;top:231px;width:90px;height:17px;padding:3px 0 0 1px;color:#000;"><span class="s" style="transform:scaleX(0.9546)">Comercial</span></div>
<div class="cl r" style="left:109px;top:231px;width:50px;height:17px;padding:3px 3px 0 0;text-align:right;color:#000;"><span class="s" style="transform:scaleX(1.0000)">11</span></div>
<div class="cl" style="left:160px;top:231px;width:187px;height:17px;padding:3px 0 0 1px;color:#000;"><span class="s" style="transform:scaleX(0.9032)">JOSÉ FRANCISCO</span></div>
<div class="cl" style="left:348px;top:231px;width:73px;height:17px;padding:3px 0 0 1px;color:#000;"><span class="s" style="transform:scaleX(0.9731)">CF 011517</span></div>
<div class="cl" style="left:422px;top:231px;width:80px;height:17px;padding:3px 0 0 1px;color:#000;"><span class="s" style="transform:scaleX(1.0437)">05/10/11 11:11</span></div>
<div class="cl" style="left:503px;top:231px;width:60px;height:17px;padding:3px 0 0 1px;color:#000;"><span class="s" style="transform:scaleX(1.0700)">1/3</span></div>
<div class="cl" style="left:655px;top:231px;width:79px;height:17px;padding:3px 0 0 1px;color:#000;"><span class="s" style="transform:scaleX(0.9772)">CF 011517-1</span></div>
<div class="cl" style="left:735px;top:231px;width:80px;height:17px;padding:3px 0 0 1px;color:#000;"><span class="s" style="transform:scaleX(0.9494)">Não Quitada</span></div>
<div class="a" style="left:18px;top:249px;width:802px;height:17px;background:#FCE784;"></div>
<div class="a" style="left:18px;top:266px;width:802px;height:1px;background:#C8C8C8;"></div>
<div class="a" style="left:6px;top:249px;width:11px;height:17px;background:#D4D0C8;"></div>
<div class="a" style="left:6px;top:249px;width:11px;height:1px;background:#FFFFFF;"></div>
<div class="a" style="left:6px;top:249px;width:1px;height:17px;background:#FFFFFF;"></div>
<div class="a" style="left:6px;top:265px;width:11px;height:1px;background:#808080;"></div>
<div class="a" style="left:16px;top:249px;width:1px;height:17px;background:#808080;"></div>
<div class="a" style="left:6px;top:266px;width:12px;height:1px;background:#000;"></div>
<div class="a" style="left:17px;top:249px;width:1px;height:18px;background:#000;"></div>
<div class="cl" style="left:18px;top:249px;width:90px;height:17px;padding:3px 0 0 1px;color:#000;"><span class="s" style="transform:scaleX(0.9546)">Comercial</span></div>
<div class="cl r" style="left:109px;top:249px;width:50px;height:17px;padding:3px 3px 0 0;text-align:right;color:#000;"><span class="s" style="transform:scaleX(1.0000)">11</span></div>
<div class="cl" style="left:160px;top:249px;width:187px;height:17px;padding:3px 0 0 1px;color:#000;"><span class="s" style="transform:scaleX(0.9032)">JOSÉ FRANCISCO</span></div>
<div class="cl" style="left:348px;top:249px;width:73px;height:17px;padding:3px 0 0 1px;color:#000;"><span class="s" style="transform:scaleX(0.9731)">CF 011517</span></div>
<div class="cl" style="left:422px;top:249px;width:80px;height:17px;padding:3px 0 0 1px;color:#000;"><span class="s" style="transform:scaleX(1.0437)">05/10/11 11:11</span></div>
<div class="cl" style="left:503px;top:249px;width:60px;height:17px;padding:3px 0 0 1px;color:#000;"><span class="s" style="transform:scaleX(1.0700)">2/3</span></div>
<div class="cl" style="left:655px;top:249px;width:79px;height:17px;padding:3px 0 0 1px;color:#000;"><span class="s" style="transform:scaleX(0.9772)">CF 011517-2</span></div>
<div class="cl" style="left:735px;top:249px;width:80px;height:17px;padding:3px 0 0 1px;color:#000;"><span class="s" style="transform:scaleX(0.9494)">Não Quitada</span></div>
<div class="a" style="left:18px;top:267px;width:802px;height:17px;background:#FCE784;"></div>
<div class="a" style="left:18px;top:284px;width:802px;height:1px;background:#C8C8C8;"></div>
<div class="a" style="left:6px;top:267px;width:11px;height:17px;background:#D4D0C8;"></div>
<div class="a" style="left:6px;top:267px;width:11px;height:1px;background:#FFFFFF;"></div>
<div class="a" style="left:6px;top:267px;width:1px;height:17px;background:#FFFFFF;"></div>
<div class="a" style="left:6px;top:283px;width:11px;height:1px;background:#808080;"></div>
<div class="a" style="left:16px;top:267px;width:1px;height:17px;background:#808080;"></div>
<div class="a" style="left:6px;top:284px;width:12px;height:1px;background:#000;"></div>
<div class="a" style="left:17px;top:267px;width:1px;height:18px;background:#000;"></div>
<div class="cl" style="left:18px;top:267px;width:90px;height:17px;padding:3px 0 0 1px;color:#000;"><span class="s" style="transform:scaleX(0.9546)">Comercial</span></div>
<div class="cl r" style="left:109px;top:267px;width:50px;height:17px;padding:3px 3px 0 0;text-align:right;color:#000;"><span class="s" style="transform:scaleX(1.0000)">11</span></div>
<div class="cl" style="left:160px;top:267px;width:187px;height:17px;padding:3px 0 0 1px;color:#000;"><span class="s" style="transform:scaleX(0.9032)">JOSÉ FRANCISCO</span></div>
<div class="cl" style="left:348px;top:267px;width:73px;height:17px;padding:3px 0 0 1px;color:#000;"><span class="s" style="transform:scaleX(0.9731)">CF 011517</span></div>
<div class="cl" style="left:422px;top:267px;width:80px;height:17px;padding:3px 0 0 1px;color:#000;"><span class="s" style="transform:scaleX(1.0437)">05/10/11 11:11</span></div>
<div class="cl" style="left:503px;top:267px;width:60px;height:17px;padding:3px 0 0 1px;color:#000;"><span class="s" style="transform:scaleX(1.0700)">3/3</span></div>
<div class="cl" style="left:655px;top:267px;width:79px;height:17px;padding:3px 0 0 1px;color:#000;"><span class="s" style="transform:scaleX(0.9772)">CF 011517-3</span></div>
<div class="cl" style="left:735px;top:267px;width:80px;height:17px;padding:3px 0 0 1px;color:#000;"><span class="s" style="transform:scaleX(0.9494)">Não Quitada</span></div>
<div class="a" style="left:18px;top:285px;width:802px;height:17px;background:#FCE784;"></div>
<div class="a" style="left:18px;top:302px;width:802px;height:1px;background:#C8C8C8;"></div>
<div class="a" style="left:6px;top:285px;width:11px;height:17px;background:#D4D0C8;"></div>
<div class="a" style="left:6px;top:285px;width:11px;height:1px;background:#FFFFFF;"></div>
<div class="a" style="left:6px;top:285px;width:1px;height:17px;background:#FFFFFF;"></div>
<div class="a" style="left:6px;top:301px;width:11px;height:1px;background:#808080;"></div>
<div class="a" style="left:16px;top:285px;width:1px;height:17px;background:#808080;"></div>
<div class="a" style="left:6px;top:302px;width:12px;height:1px;background:#000;"></div>
<div class="a" style="left:17px;top:285px;width:1px;height:18px;background:#000;"></div>
<div class="cl" style="left:18px;top:285px;width:90px;height:17px;padding:3px 0 0 1px;color:#000;"><span class="s" style="transform:scaleX(0.9546)">Comercial</span></div>
<div class="cl r" style="left:109px;top:285px;width:50px;height:17px;padding:3px 3px 0 0;text-align:right;color:#000;"><span class="s" style="transform:scaleX(1.0000)">12</span></div>
<div class="cl" style="left:160px;top:285px;width:187px;height:17px;padding:3px 0 0 1px;color:#000;"><span class="s" style="transform:scaleX(0.9034)">MARIA CRISTINA</span></div>
<div class="cl" style="left:348px;top:285px;width:73px;height:17px;padding:3px 0 0 1px;color:#000;"><span class="s" style="transform:scaleX(0.9731)">CF 011518</span></div>
<div class="cl" style="left:422px;top:285px;width:80px;height:17px;padding:3px 0 0 1px;color:#000;"><span class="s" style="transform:scaleX(1.0437)">05/10/11 11:13</span></div>
<div class="cl" style="left:503px;top:285px;width:60px;height:17px;padding:3px 0 0 1px;color:#000;"><span class="s" style="transform:scaleX(1.0700)">1/1</span></div>
<div class="cl" style="left:655px;top:285px;width:79px;height:17px;padding:3px 0 0 1px;color:#000;"><span class="s" style="transform:scaleX(0.9772)">CF 011518-1</span></div>
<div class="cl" style="left:735px;top:285px;width:80px;height:17px;padding:3px 0 0 1px;color:#000;"><span class="s" style="transform:scaleX(0.9494)">Não Quitada</span></div>
<div class="a" style="left:18px;top:303px;width:802px;height:17px;background:#FCE784;"></div>
<div class="a" style="left:18px;top:320px;width:802px;height:1px;background:#C8C8C8;"></div>
<div class="a" style="left:6px;top:303px;width:11px;height:17px;background:#D4D0C8;"></div>
<div class="a" style="left:6px;top:303px;width:11px;height:1px;background:#FFFFFF;"></div>
<div class="a" style="left:6px;top:303px;width:1px;height:17px;background:#FFFFFF;"></div>
<div class="a" style="left:6px;top:319px;width:11px;height:1px;background:#808080;"></div>
<div class="a" style="left:16px;top:303px;width:1px;height:17px;background:#808080;"></div>
<div class="a" style="left:6px;top:320px;width:12px;height:1px;background:#000;"></div>
<div class="a" style="left:17px;top:303px;width:1px;height:18px;background:#000;"></div>
<div class="cl" style="left:18px;top:303px;width:90px;height:17px;padding:3px 0 0 1px;color:#000;"><span class="s" style="transform:scaleX(0.9546)">Comercial</span></div>
<div class="cl r" style="left:109px;top:303px;width:50px;height:17px;padding:3px 3px 0 0;text-align:right;color:#000;"><span class="s" style="transform:scaleX(1.0000)">11</span></div>
<div class="cl" style="left:160px;top:303px;width:187px;height:17px;padding:3px 0 0 1px;color:#000;"><span class="s" style="transform:scaleX(0.9032)">JOSÉ FRANCISCO</span></div>
<div class="cl" style="left:348px;top:303px;width:73px;height:17px;padding:3px 0 0 1px;color:#000;"><span class="s" style="transform:scaleX(0.9731)">CF 011525</span></div>
<div class="cl" style="left:422px;top:303px;width:80px;height:17px;padding:3px 0 0 1px;color:#000;"><span class="s" style="transform:scaleX(1.0437)">05/10/11 11:52</span></div>
<div class="cl" style="left:503px;top:303px;width:60px;height:17px;padding:3px 0 0 1px;color:#000;"><span class="s" style="transform:scaleX(1.0700)">1/2</span></div>
<div class="cl" style="left:655px;top:303px;width:79px;height:17px;padding:3px 0 0 1px;color:#000;"><span class="s" style="transform:scaleX(0.9772)">CF 011525-1</span></div>
<div class="cl" style="left:735px;top:303px;width:80px;height:17px;padding:3px 0 0 1px;color:#000;"><span class="s" style="transform:scaleX(0.9494)">Não Quitada</span></div>
<div class="a" style="left:18px;top:321px;width:802px;height:17px;background:#FCE784;"></div>
<div class="a" style="left:18px;top:338px;width:802px;height:1px;background:#C8C8C8;"></div>
<div class="a" style="left:6px;top:321px;width:11px;height:17px;background:#D4D0C8;"></div>
<div class="a" style="left:6px;top:321px;width:11px;height:1px;background:#FFFFFF;"></div>
<div class="a" style="left:6px;top:321px;width:1px;height:17px;background:#FFFFFF;"></div>
<div class="a" style="left:6px;top:337px;width:11px;height:1px;background:#808080;"></div>
<div class="a" style="left:16px;top:321px;width:1px;height:17px;background:#808080;"></div>
<div class="a" style="left:6px;top:338px;width:12px;height:1px;background:#000;"></div>
<div class="a" style="left:17px;top:321px;width:1px;height:18px;background:#000;"></div>
<div class="cl" style="left:18px;top:321px;width:90px;height:17px;padding:3px 0 0 1px;color:#000;"><span class="s" style="transform:scaleX(0.9546)">Comercial</span></div>
<div class="cl r" style="left:109px;top:321px;width:50px;height:17px;padding:3px 3px 0 0;text-align:right;color:#000;"><span class="s" style="transform:scaleX(1.0000)">11</span></div>
<div class="cl" style="left:160px;top:321px;width:187px;height:17px;padding:3px 0 0 1px;color:#000;"><span class="s" style="transform:scaleX(0.9032)">JOSÉ FRANCISCO</span></div>
<div class="cl" style="left:348px;top:321px;width:73px;height:17px;padding:3px 0 0 1px;color:#000;"><span class="s" style="transform:scaleX(0.9731)">CF 011525</span></div>
<div class="cl" style="left:422px;top:321px;width:80px;height:17px;padding:3px 0 0 1px;color:#000;"><span class="s" style="transform:scaleX(1.0437)">05/10/11 11:52</span></div>
<div class="cl" style="left:503px;top:321px;width:60px;height:17px;padding:3px 0 0 1px;color:#000;"><span class="s" style="transform:scaleX(1.0700)">2/2</span></div>
<div class="cl" style="left:655px;top:321px;width:79px;height:17px;padding:3px 0 0 1px;color:#000;"><span class="s" style="transform:scaleX(0.9772)">CF 011525-2</span></div>
<div class="cl" style="left:735px;top:321px;width:80px;height:17px;padding:3px 0 0 1px;color:#000;"><span class="s" style="transform:scaleX(0.9494)">Não Quitada</span></div>
<div class="a" style="left:18px;top:339px;width:802px;height:17px;background:#FCE784;"></div>
<div class="a" style="left:18px;top:356px;width:802px;height:1px;background:#C8C8C8;"></div>
<div class="a" style="left:6px;top:339px;width:11px;height:17px;background:#D4D0C8;"></div>
<div class="a" style="left:6px;top:339px;width:11px;height:1px;background:#FFFFFF;"></div>
<div class="a" style="left:6px;top:339px;width:1px;height:17px;background:#FFFFFF;"></div>
<div class="a" style="left:6px;top:355px;width:11px;height:1px;background:#808080;"></div>
<div class="a" style="left:16px;top:339px;width:1px;height:17px;background:#808080;"></div>
<div class="a" style="left:6px;top:356px;width:12px;height:1px;background:#000;"></div>
<div class="a" style="left:17px;top:339px;width:1px;height:18px;background:#000;"></div>
<div class="cl" style="left:18px;top:339px;width:90px;height:17px;padding:3px 0 0 1px;color:#000;"><span class="s" style="transform:scaleX(0.9546)">Comercial</span></div>
<div class="cl r" style="left:109px;top:339px;width:50px;height:17px;padding:3px 3px 0 0;text-align:right;color:#000;"><span class="s" style="transform:scaleX(1.0000)">13</span></div>
<div class="cl" style="left:160px;top:339px;width:187px;height:17px;padding:3px 0 0 1px;color:#000;"><span class="s" style="transform:scaleX(0.9054)">CAROLINA DE JESUS</span></div>
<div class="cl" style="left:348px;top:339px;width:73px;height:17px;padding:3px 0 0 1px;color:#000;"><span class="s" style="transform:scaleX(0.9731)">CF 011526</span></div>
<div class="cl" style="left:422px;top:339px;width:80px;height:17px;padding:3px 0 0 1px;color:#000;"><span class="s" style="transform:scaleX(1.0437)">05/10/11 11:53</span></div>
<div class="cl" style="left:503px;top:339px;width:60px;height:17px;padding:3px 0 0 1px;color:#000;"><span class="s" style="transform:scaleX(1.0700)">1/2</span></div>
<div class="cl" style="left:655px;top:339px;width:79px;height:17px;padding:3px 0 0 1px;color:#000;"><span class="s" style="transform:scaleX(0.9772)">CF 011526-1</span></div>
<div class="cl" style="left:735px;top:339px;width:80px;height:17px;padding:3px 0 0 1px;color:#000;"><span class="s" style="transform:scaleX(0.9494)">Não Quitada</span></div>
<div class="a" style="left:18px;top:357px;width:802px;height:17px;background:#FCE784;"></div>
<div class="a" style="left:18px;top:374px;width:802px;height:1px;background:#C8C8C8;"></div>
<div class="a" style="left:6px;top:357px;width:11px;height:17px;background:#D4D0C8;"></div>
<div class="a" style="left:6px;top:357px;width:11px;height:1px;background:#FFFFFF;"></div>
<div class="a" style="left:6px;top:357px;width:1px;height:17px;background:#FFFFFF;"></div>
<div class="a" style="left:6px;top:373px;width:11px;height:1px;background:#808080;"></div>
<div class="a" style="left:16px;top:357px;width:1px;height:17px;background:#808080;"></div>
<div class="a" style="left:6px;top:374px;width:12px;height:1px;background:#000;"></div>
<div class="a" style="left:17px;top:357px;width:1px;height:18px;background:#000;"></div>
<div class="cl" style="left:18px;top:357px;width:90px;height:17px;padding:3px 0 0 1px;color:#000;"><span class="s" style="transform:scaleX(0.9546)">Comercial</span></div>
<div class="cl r" style="left:109px;top:357px;width:50px;height:17px;padding:3px 3px 0 0;text-align:right;color:#000;"><span class="s" style="transform:scaleX(1.0000)">13</span></div>
<div class="cl" style="left:160px;top:357px;width:187px;height:17px;padding:3px 0 0 1px;color:#000;"><span class="s" style="transform:scaleX(0.9054)">CAROLINA DE JESUS</span></div>
<div class="cl" style="left:348px;top:357px;width:73px;height:17px;padding:3px 0 0 1px;color:#000;"><span class="s" style="transform:scaleX(0.9731)">CF 011526</span></div>
<div class="cl" style="left:422px;top:357px;width:80px;height:17px;padding:3px 0 0 1px;color:#000;"><span class="s" style="transform:scaleX(1.0437)">05/10/11 11:53</span></div>
<div class="cl" style="left:503px;top:357px;width:60px;height:17px;padding:3px 0 0 1px;color:#000;"><span class="s" style="transform:scaleX(1.0700)">2/2</span></div>
<div class="cl" style="left:655px;top:357px;width:79px;height:17px;padding:3px 0 0 1px;color:#000;"><span class="s" style="transform:scaleX(0.9772)">CF 011526-2</span></div>
<div class="cl" style="left:735px;top:357px;width:80px;height:17px;padding:3px 0 0 1px;color:#000;"><span class="s" style="transform:scaleX(0.9494)">Não Quitada</span></div>
<div class="a" style="left:108px;top:141px;width:1px;height:234px;background:#C8C8C8;"></div>
<div class="a" style="left:159px;top:141px;width:1px;height:234px;background:#C8C8C8;"></div>
<div class="a" style="left:347px;top:141px;width:1px;height:234px;background:#C8C8C8;"></div>
<div class="a" style="left:421px;top:141px;width:1px;height:234px;background:#C8C8C8;"></div>
<div class="a" style="left:502px;top:141px;width:1px;height:234px;background:#C8C8C8;"></div>
<div class="a" style="left:563px;top:141px;width:1px;height:234px;background:#C8C8C8;"></div>
<div class="a" style="left:654px;top:141px;width:1px;height:234px;background:#C8C8C8;"></div>
<div class="a" style="left:734px;top:141px;width:1px;height:234px;background:#C8C8C8;"></div>
<div class="a" style="left:815px;top:141px;width:1px;height:234px;background:#C8C8C8;"></div>
<svg style="left:9px;top:144px;opacity:1.0" width="6" height="12" shape-rendering="crispEdges"><rect x="0" y="0" width="1" height="1" fill="#000000"/><rect x="0" y="1" width="2" height="1" fill="#000000"/><rect x="0" y="2" width="3" height="1" fill="#000000"/><rect x="0" y="3" width="4" height="1" fill="#000000"/><rect x="0" y="4" width="5" height="1" fill="#000000"/><rect x="0" y="5" width="6" height="1" fill="#000000"/><rect x="0" y="6" width="6" height="1" fill="#000000"/><rect x="0" y="7" width="5" height="1" fill="#000000"/><rect x="0" y="8" width="4" height="1" fill="#000000"/><rect x="0" y="9" width="3" height="1" fill="#000000"/><rect x="0" y="10" width="2" height="1" fill="#000000"/><rect x="0" y="11" width="1" height="1" fill="#000000"/></svg>
<svg style="left:820px;top:106px" width="16" height="378" shape-rendering="crispEdges"><defs><pattern id="p1" width="2" height="2" patternUnits="userSpaceOnUse"><rect width="2" height="2" fill="#fff"/><rect width="1" height="1" fill="#D4D0C8"/><rect x="1" y="1" width="1" height="1" fill="#D4D0C8"/></pattern></defs><rect width="16" height="378" fill="url(#p1)"/></svg>
<svg style="left:6px;top:484px" width="814" height="16" shape-rendering="crispEdges"><defs><pattern id="p2" width="2" height="2" patternUnits="userSpaceOnUse"><rect width="2" height="2" fill="#fff"/><rect width="1" height="1" fill="#D4D0C8"/><rect x="1" y="1" width="1" height="1" fill="#D4D0C8"/></pattern></defs><rect width="814" height="16" fill="url(#p2)"/></svg>
<div class="a" style="left:820px;top:484px;width:16px;height:16px;background:#D4D0C8;"></div>
<div class="a" style="left:820px;top:106px;width:16px;height:16px;background:#D4D0C8;border-top:1px solid #D4D0C8;border-left:1px solid #D4D0C8;border-right:1px solid #404040;border-bottom:1px solid #404040"></div>
<div class="a" style="left:821px;top:107px;width:14px;height:14px;border-top:1px solid #FFFFFF;border-left:1px solid #FFFFFF;border-right:1px solid #808080;border-bottom:1px solid #808080"></div>
<div class="a" style="left:820px;top:122px;width:16px;height:180px;background:#D4D0C8;border-top:1px solid #D4D0C8;border-left:1px solid #D4D0C8;border-right:1px solid #404040;border-bottom:1px solid #404040"></div>
<div class="a" style="left:821px;top:123px;width:14px;height:178px;border-top:1px solid #FFFFFF;border-left:1px solid #FFFFFF;border-right:1px solid #808080;border-bottom:1px solid #808080"></div>
<div class="a" style="left:820px;top:468px;width:16px;height:16px;background:#D4D0C8;border-top:1px solid #D4D0C8;border-left:1px solid #D4D0C8;border-right:1px solid #404040;border-bottom:1px solid #404040"></div>
<div class="a" style="left:821px;top:469px;width:14px;height:14px;border-top:1px solid #FFFFFF;border-left:1px solid #FFFFFF;border-right:1px solid #808080;border-bottom:1px solid #808080"></div>
<div class="a" style="left:6px;top:484px;width:16px;height:16px;background:#D4D0C8;border-top:1px solid #D4D0C8;border-left:1px solid #D4D0C8;border-right:1px solid #404040;border-bottom:1px solid #404040"></div>
<div class="a" style="left:7px;top:485px;width:14px;height:14px;border-top:1px solid #FFFFFF;border-left:1px solid #FFFFFF;border-right:1px solid #808080;border-bottom:1px solid #808080"></div>
<div class="a" style="left:22px;top:484px;width:16px;height:16px;background:#D4D0C8;border-top:1px solid #D4D0C8;border-left:1px solid #D4D0C8;border-right:1px solid #404040;border-bottom:1px solid #404040"></div>
<div class="a" style="left:23px;top:485px;width:14px;height:14px;border-top:1px solid #FFFFFF;border-left:1px solid #FFFFFF;border-right:1px solid #808080;border-bottom:1px solid #808080"></div>
<div class="a" style="left:804px;top:484px;width:16px;height:16px;background:#D4D0C8;border-top:1px solid #D4D0C8;border-left:1px solid #D4D0C8;border-right:1px solid #404040;border-bottom:1px solid #404040"></div>
<div class="a" style="left:805px;top:485px;width:14px;height:14px;border-top:1px solid #FFFFFF;border-left:1px solid #FFFFFF;border-right:1px solid #808080;border-bottom:1px solid #808080"></div>
<svg style="left:824px;top:112px;opacity:1.0" width="7" height="4" shape-rendering="crispEdges"><rect x="3" y="0" width="1" height="1" fill="#000000"/><rect x="2" y="1" width="3" height="1" fill="#000000"/><rect x="1" y="2" width="5" height="1" fill="#000000"/><rect x="0" y="3" width="7" height="1" fill="#000000"/></svg>
<svg style="left:824px;top:474px;opacity:1.0" width="7" height="4" shape-rendering="crispEdges"><rect x="0" y="0" width="7" height="1" fill="#000000"/><rect x="1" y="1" width="5" height="1" fill="#000000"/><rect x="2" y="2" width="3" height="1" fill="#000000"/><rect x="3" y="3" width="1" height="1" fill="#000000"/></svg>
<svg style="left:11px;top:488px;opacity:1.0" width="4" height="7" shape-rendering="crispEdges"><rect x="3" y="0" width="1" height="1" fill="#000000"/><rect x="2" y="1" width="2" height="1" fill="#000000"/><rect x="1" y="2" width="3" height="1" fill="#000000"/><rect x="0" y="3" width="4" height="1" fill="#000000"/><rect x="1" y="4" width="3" height="1" fill="#000000"/><rect x="2" y="5" width="2" height="1" fill="#000000"/><rect x="3" y="6" width="1" height="1" fill="#000000"/></svg>
<svg style="left:810px;top:488px;opacity:1.0" width="4" height="7" shape-rendering="crispEdges"><rect x="0" y="0" width="1" height="1" fill="#000000"/><rect x="0" y="1" width="2" height="1" fill="#000000"/><rect x="0" y="2" width="3" height="1" fill="#000000"/><rect x="0" y="3" width="4" height="1" fill="#000000"/><rect x="0" y="4" width="3" height="1" fill="#000000"/><rect x="0" y="5" width="2" height="1" fill="#000000"/><rect x="0" y="6" width="1" height="1" fill="#000000"/></svg>
<div class="a" style="left:760px;top:507px;width:75px;height:25px;background:#D4D0C8;border-top:1px solid #FFFFFF;border-left:1px solid #FFFFFF;border-right:1px solid #404040;border-bottom:1px solid #404040"></div>
<div class="a" style="left:761px;top:508px;width:73px;height:23px;border-top:1px solid #D4D0C8;border-left:1px solid #D4D0C8;border-right:1px solid #808080;border-bottom:1px solid #808080"></div>
<div class="t" style="left:802px;top:514px;transform:scaleX(0.9500);">Sair</div>
<svg style="left:24px;top:54px;opacity:1.0" width="7" height="15" shape-rendering="crispEdges"><rect x="3" y="0" width="1" height="1" fill="#000080"/><rect x="2" y="1" width="3" height="1" fill="#000080"/><rect x="2" y="2" width="1" height="1" fill="#000080"/><rect x="4" y="2" width="1" height="1" fill="#000080"/><rect x="1" y="3" width="2" height="1" fill="#000080"/><rect x="4" y="3" width="2" height="1" fill="#000080"/><rect x="1" y="4" width="5" height="1" fill="#000080"/><rect x="1" y="5" width="1" height="1" fill="#000080"/><rect x="5" y="5" width="1" height="1" fill="#000080"/><rect x="0" y="6" width="3" height="1" fill="#000080"/><rect x="4" y="6" width="3" height="1" fill="#000080"/><rect x="0" y="8" width="7" height="1" fill="#800000"/><rect x="0" y="9" width="1" height="1" fill="#800000"/><rect x="4" y="9" width="2" height="1" fill="#800000"/><rect x="3" y="10" width="2" height="1" fill="#800000"/><rect x="2" y="11" width="2" height="1" fill="#800000"/><rect x="1" y="12" width="2" height="1" fill="#800000"/><rect x="0" y="13" width="2" height="1" fill="#800000"/><rect x="5" y="13" width="2" height="1" fill="#800000"/><rect x="0" y="14" width="7" height="1" fill="#800000"/></svg>
<svg style="left:33px;top:54px;opacity:1.0" width="5" height="15" shape-rendering="crispEdges"><rect x="2" y="0" width="1" height="1" fill="#000000"/><rect x="2" y="1" width="1" height="1" fill="#000000"/><rect x="2" y="2" width="1" height="1" fill="#000000"/><rect x="2" y="3" width="1" height="1" fill="#000000"/><rect x="2" y="4" width="1" height="1" fill="#000000"/><rect x="2" y="5" width="1" height="1" fill="#000000"/><rect x="2" y="6" width="1" height="1" fill="#000000"/><rect x="2" y="7" width="1" height="1" fill="#000000"/><rect x="2" y="8" width="1" height="1" fill="#000000"/><rect x="2" y="9" width="1" height="1" fill="#000000"/><rect x="0" y="10" width="5" height="1" fill="#000000"/><rect x="0" y="11" width="5" height="1" fill="#000000"/><rect x="1" y="12" width="3" height="1" fill="#000000"/><rect x="1" y="13" width="3" height="1" fill="#000000"/><rect x="2" y="14" width="1" height="1" fill="#000000"/></svg>
<svg style="left:58px;top:54px;opacity:1.0" width="7" height="15" shape-rendering="crispEdges"><rect x="0" y="0" width="7" height="1" fill="#800000"/><rect x="0" y="1" width="1" height="1" fill="#800000"/><rect x="4" y="1" width="2" height="1" fill="#800000"/><rect x="3" y="2" width="2" height="1" fill="#800000"/><rect x="2" y="3" width="2" height="1" fill="#800000"/><rect x="1" y="4" width="2" height="1" fill="#800000"/><rect x="0" y="5" width="2" height="1" fill="#800000"/><rect x="5" y="5" width="2" height="1" fill="#800000"/><rect x="0" y="6" width="7" height="1" fill="#800000"/><rect x="3" y="8" width="1" height="1" fill="#000080"/><rect x="2" y="9" width="3" height="1" fill="#000080"/><rect x="2" y="10" width="1" height="1" fill="#000080"/><rect x="4" y="10" width="1" height="1" fill="#000080"/><rect x="1" y="11" width="2" height="1" fill="#000080"/><rect x="4" y="11" width="2" height="1" fill="#000080"/><rect x="1" y="12" width="5" height="1" fill="#000080"/><rect x="1" y="13" width="1" height="1" fill="#000080"/><rect x="5" y="13" width="1" height="1" fill="#000080"/><rect x="0" y="14" width="3" height="1" fill="#000080"/><rect x="4" y="14" width="3" height="1" fill="#000080"/></svg>
<svg style="left:67px;top:54px;opacity:1.0" width="5" height="15" shape-rendering="crispEdges"><rect x="2" y="0" width="1" height="1" fill="#000000"/><rect x="2" y="1" width="1" height="1" fill="#000000"/><rect x="2" y="2" width="1" height="1" fill="#000000"/><rect x="2" y="3" width="1" height="1" fill="#000000"/><rect x="2" y="4" width="1" height="1" fill="#000000"/><rect x="2" y="5" width="1" height="1" fill="#000000"/><rect x="2" y="6" width="1" height="1" fill="#000000"/><rect x="2" y="7" width="1" height="1" fill="#000000"/><rect x="2" y="8" width="1" height="1" fill="#000000"/><rect x="2" y="9" width="1" height="1" fill="#000000"/><rect x="0" y="10" width="5" height="1" fill="#000000"/><rect x="0" y="11" width="5" height="1" fill="#000000"/><rect x="1" y="12" width="3" height="1" fill="#000000"/><rect x="1" y="13" width="3" height="1" fill="#000000"/><rect x="2" y="14" width="1" height="1" fill="#000000"/></svg>
<svg style="left:92px;top:54px;opacity:1.0" width="16" height="16" shape-rendering="crispEdges"><rect x="3" y="0" width="1" height="1" fill="#000080"/><rect x="2" y="1" width="3" height="1" fill="#000080"/><rect x="2" y="2" width="1" height="1" fill="#000080"/><rect x="4" y="2" width="1" height="1" fill="#000080"/><rect x="1" y="3" width="2" height="1" fill="#000080"/><rect x="4" y="3" width="2" height="1" fill="#000080"/><rect x="1" y="4" width="2" height="1" fill="#000080"/><rect x="3" y="4" width="2" height="1" fill="#FF0000"/><rect x="5" y="4" width="1" height="1" fill="#000080"/><rect x="1" y="5" width="1" height="1" fill="#000080"/><rect x="4" y="5" width="2" height="1" fill="#FF0000"/><rect x="13" y="5" width="2" height="1" fill="#FF0000"/><rect x="0" y="6" width="3" height="1" fill="#000080"/><rect x="4" y="6" width="1" height="1" fill="#000080"/><rect x="5" y="6" width="2" height="1" fill="#FF0000"/><rect x="12" y="6" width="2" height="1" fill="#FF0000"/><rect x="6" y="7" width="2" height="1" fill="#FF0000"/><rect x="11" y="7" width="2" height="1" fill="#FF0000"/><rect x="0" y="8" width="7" height="1" fill="#800000"/><rect x="7" y="8" width="2" height="1" fill="#FF0000"/><rect x="10" y="8" width="2" height="1" fill="#FF0000"/><rect x="0" y="9" width="1" height="1" fill="#800000"/><rect x="4" y="9" width="2" height="1" fill="#800000"/><rect x="8" y="9" width="3" height="1" fill="#FF0000"/><rect x="3" y="10" width="2" height="1" fill="#800000"/><rect x="8" y="10" width="3" height="1" fill="#FF0000"/><rect x="2" y="11" width="2" height="1" fill="#800000"/><rect x="7" y="11" width="2" height="1" fill="#FF0000"/><rect x="10" y="11" width="2" height="1" fill="#FF0000"/><rect x="1" y="12" width="2" height="1" fill="#800000"/><rect x="6" y="12" width="2" height="1" fill="#FF0000"/><rect x="11" y="12" width="2" height="1" fill="#FF0000"/><rect x="0" y="13" width="2" height="1" fill="#800000"/><rect x="5" y="13" width="2" height="1" fill="#FF0000"/><rect x="12" y="13" width="2" height="1" fill="#FF0000"/><rect x="0" y="14" width="4" height="1" fill="#800000"/><rect x="4" y="14" width="2" height="1" fill="#FF0000"/><rect x="6" y="14" width="1" height="1" fill="#800000"/><rect x="13" y="14" width="2" height="1" fill="#FF0000"/><rect x="3" y="15" width="2" height="1" fill="#FF0000"/><rect x="14" y="15" width="2" height="1" fill="#FF0000"/></svg>
<svg style="left:133px;top:56px;opacity:1.0" width="15" height="11" shape-rendering="crispEdges"><rect x="0" y="0" width="15" height="1" fill="#000000"/><rect x="0" y="1" width="1" height="1" fill="#000000"/><rect x="1" y="1" width="11" height="1" fill="#FFFFFF"/><rect x="12" y="1" width="2" height="1" fill="#008080"/><rect x="14" y="1" width="1" height="1" fill="#000000"/><rect x="1" y="2" width="1" height="1" fill="#000000"/><rect x="2" y="2" width="1" height="1" fill="#008080"/><rect x="3" y="2" width="8" height="1" fill="#FFFFFF"/><rect x="11" y="2" width="2" height="1" fill="#008080"/><rect x="13" y="2" width="1" height="1" fill="#000000"/><rect x="2" y="3" width="1" height="1" fill="#000000"/><rect x="3" y="3" width="1" height="1" fill="#008080"/><rect x="4" y="3" width="6" height="1" fill="#FFFFFF"/><rect x="10" y="3" width="2" height="1" fill="#008080"/><rect x="12" y="3" width="1" height="1" fill="#000000"/><rect x="3" y="4" width="1" height="1" fill="#000000"/><rect x="4" y="4" width="1" height="1" fill="#008080"/><rect x="5" y="4" width="4" height="1" fill="#FFFFFF"/><rect x="9" y="4" width="2" height="1" fill="#008080"/><rect x="11" y="4" width="1" height="1" fill="#000000"/><rect x="4" y="5" width="1" height="1" fill="#000000"/><rect x="5" y="5" width="1" height="1" fill="#008080"/><rect x="6" y="5" width="3" height="1" fill="#FFFFFF"/><rect x="9" y="5" width="1" height="1" fill="#008080"/><rect x="10" y="5" width="1" height="1" fill="#000000"/><rect x="5" y="6" width="1" height="1" fill="#000000"/><rect x="6" y="6" width="2" height="1" fill="#FFFFFF"/><rect x="8" y="6" width="1" height="1" fill="#008080"/><rect x="9" y="6" width="1" height="1" fill="#000000"/><rect x="5" y="7" width="1" height="1" fill="#000000"/><rect x="6" y="7" width="2" height="1" fill="#FFFFFF"/><rect x="8" y="7" width="1" height="1" fill="#008080"/><rect x="9" y="7" width="1" height="1" fill="#000000"/><rect x="5" y="8" width="1" height="1" fill="#000000"/><rect x="6" y="8" width="2" height="1" fill="#FFFFFF"/><rect x="8" y="8" width="1" height="1" fill="#008080"/><rect x="9" y="8" width="1" height="1" fill="#000000"/><rect x="5" y="9" width="1" height="1" fill="#000000"/><rect x="6" y="9" width="3" height="1" fill="#008080"/><rect x="9" y="9" width="1" height="1" fill="#000000"/><rect x="5" y="10" width="5" height="1" fill="#000000"/></svg>
<svg style="left:167px;top:56px;opacity:1.0" width="17" height="13" shape-rendering="crispEdges"><rect x="0" y="0" width="15" height="1" fill="#000000"/><rect x="0" y="1" width="1" height="1" fill="#000000"/><rect x="1" y="1" width="2" height="1" fill="#FFFFFF"/><rect x="3" y="1" width="2" height="1" fill="#FF0000"/><rect x="5" y="1" width="7" height="1" fill="#FFFFFF"/><rect x="12" y="1" width="2" height="1" fill="#008080"/><rect x="14" y="1" width="1" height="1" fill="#000000"/><rect x="1" y="2" width="1" height="1" fill="#000000"/><rect x="2" y="2" width="1" height="1" fill="#008080"/><rect x="3" y="2" width="1" height="1" fill="#FFFFFF"/><rect x="4" y="2" width="2" height="1" fill="#FF0000"/><rect x="6" y="2" width="5" height="1" fill="#FFFFFF"/><rect x="11" y="2" width="2" height="1" fill="#008080"/><rect x="13" y="2" width="1" height="1" fill="#000000"/><rect x="14" y="2" width="2" height="1" fill="#FF0000"/><rect x="2" y="3" width="1" height="1" fill="#000000"/><rect x="3" y="3" width="1" height="1" fill="#008080"/><rect x="4" y="3" width="1" height="1" fill="#FFFFFF"/><rect x="5" y="3" width="2" height="1" fill="#FF0000"/><rect x="7" y="3" width="3" height="1" fill="#FFFFFF"/><rect x="10" y="3" width="2" height="1" fill="#008080"/><rect x="12" y="3" width="1" height="1" fill="#000000"/><rect x="13" y="3" width="2" height="1" fill="#FF0000"/><rect x="3" y="4" width="1" height="1" fill="#000000"/><rect x="4" y="4" width="1" height="1" fill="#008080"/><rect x="5" y="4" width="1" height="1" fill="#FFFFFF"/><rect x="6" y="4" width="2" height="1" fill="#FF0000"/><rect x="8" y="4" width="1" height="1" fill="#FFFFFF"/><rect x="9" y="4" width="2" height="1" fill="#008080"/><rect x="11" y="4" width="1" height="1" fill="#000000"/><rect x="12" y="4" width="2" height="1" fill="#FF0000"/><rect x="4" y="5" width="1" height="1" fill="#000000"/><rect x="5" y="5" width="1" height="1" fill="#008080"/><rect x="6" y="5" width="1" height="1" fill="#FFFFFF"/><rect x="7" y="5" width="2" height="1" fill="#FF0000"/><rect x="9" y="5" width="1" height="1" fill="#008080"/><rect x="10" y="5" width="1" height="1" fill="#000000"/><rect x="11" y="5" width="2" height="1" fill="#FF0000"/><rect x="5" y="6" width="1" height="1" fill="#000000"/><rect x="6" y="6" width="2" height="1" fill="#FFFFFF"/><rect x="8" y="6" width="4" height="1" fill="#FF0000"/><rect x="5" y="7" width="1" height="1" fill="#000000"/><rect x="6" y="7" width="2" height="1" fill="#FFFFFF"/><rect x="8" y="7" width="1" height="1" fill="#008080"/><rect x="9" y="7" width="2" height="1" fill="#FF0000"/><rect x="5" y="8" width="1" height="1" fill="#000000"/><rect x="6" y="8" width="2" height="1" fill="#FFFFFF"/><rect x="8" y="8" width="4" height="1" fill="#FF0000"/><rect x="5" y="9" width="1" height="1" fill="#000000"/><rect x="6" y="9" width="1" height="1" fill="#008080"/><rect x="7" y="9" width="2" height="1" fill="#FF0000"/><rect x="9" y="9" width="1" height="1" fill="#000000"/><rect x="11" y="9" width="2" height="1" fill="#FF0000"/><rect x="5" y="10" width="1" height="1" fill="#000000"/><rect x="6" y="10" width="2" height="1" fill="#FF0000"/><rect x="8" y="10" width="2" height="1" fill="#000000"/><rect x="12" y="10" width="2" height="1" fill="#FF0000"/><rect x="5" y="11" width="2" height="1" fill="#FF0000"/><rect x="13" y="11" width="2" height="1" fill="#FF0000"/><rect x="4" y="12" width="2" height="1" fill="#FF0000"/><rect x="14" y="12" width="2" height="1" fill="#FF0000"/></svg>
<svg style="left:208px;top:54px;opacity:1.0" width="15" height="13" shape-rendering="crispEdges"><rect x="3" y="0" width="3" height="1" fill="#000000"/><rect x="9" y="0" width="3" height="1" fill="#000000"/><rect x="3" y="1" width="1" height="1" fill="#000000"/><rect x="4" y="1" width="1" height="1" fill="#FFFFFF"/><rect x="5" y="1" width="1" height="1" fill="#000000"/><rect x="9" y="1" width="1" height="1" fill="#000000"/><rect x="10" y="1" width="1" height="1" fill="#FFFFFF"/><rect x="11" y="1" width="1" height="1" fill="#000000"/><rect x="2" y="2" width="4" height="1" fill="#000000"/><rect x="9" y="2" width="4" height="1" fill="#000000"/><rect x="2" y="3" width="1" height="1" fill="#000000"/><rect x="3" y="3" width="1" height="1" fill="#FFFFFF"/><rect x="4" y="3" width="3" height="1" fill="#000000"/><rect x="8" y="3" width="1" height="1" fill="#000000"/><rect x="9" y="3" width="1" height="1" fill="#FFFFFF"/><rect x="10" y="3" width="3" height="1" fill="#000000"/><rect x="1" y="4" width="7" height="1" fill="#000000"/><rect x="9" y="4" width="6" height="1" fill="#000000"/><rect x="0" y="5" width="3" height="1" fill="#000000"/><rect x="3" y="5" width="1" height="1" fill="#FFFFFF"/><rect x="4" y="5" width="2" height="1" fill="#000000"/><rect x="6" y="5" width="1" height="1" fill="#FFFFFF"/><rect x="7" y="5" width="3" height="1" fill="#000000"/><rect x="10" y="5" width="1" height="1" fill="#FFFFFF"/><rect x="11" y="5" width="4" height="1" fill="#000000"/><rect x="0" y="6" width="3" height="1" fill="#000000"/><rect x="3" y="6" width="1" height="1" fill="#FFFFFF"/><rect x="4" y="6" width="2" height="1" fill="#000000"/><rect x="6" y="6" width="1" height="1" fill="#FFFFFF"/><rect x="7" y="6" width="3" height="1" fill="#000000"/><rect x="10" y="6" width="1" height="1" fill="#FFFFFF"/><rect x="11" y="6" width="4" height="1" fill="#000000"/><rect x="0" y="7" width="3" height="1" fill="#000000"/><rect x="3" y="7" width="1" height="1" fill="#FFFFFF"/><rect x="4" y="7" width="7" height="1" fill="#000000"/><rect x="11" y="7" width="1" height="1" fill="#FFFFFF"/><rect x="12" y="7" width="3" height="1" fill="#000000"/><rect x="0" y="8" width="11" height="1" fill="#000000"/><rect x="11" y="8" width="1" height="1" fill="#FFFFFF"/><rect x="12" y="8" width="3" height="1" fill="#000000"/><rect x="0" y="9" width="7" height="1" fill="#000000"/><rect x="8" y="9" width="7" height="1" fill="#000000"/><rect x="0" y="10" width="1" height="1" fill="#000000"/><rect x="1" y="10" width="1" height="1" fill="#FFFFFF"/><rect x="2" y="10" width="4" height="1" fill="#000000"/><rect x="9" y="10" width="1" height="1" fill="#000000"/><rect x="10" y="10" width="1" height="1" fill="#FFFFFF"/><rect x="11" y="10" width="4" height="1" fill="#000000"/><rect x="0" y="11" width="1" height="1" fill="#000000"/><rect x="1" y="11" width="1" height="1" fill="#FFFFFF"/><rect x="2" y="11" width="4" height="1" fill="#000000"/><rect x="9" y="11" width="1" height="1" fill="#000000"/><rect x="10" y="11" width="1" height="1" fill="#FFFFFF"/><rect x="11" y="11" width="4" height="1" fill="#000000"/><rect x="0" y="12" width="6" height="1" fill="#000000"/><rect x="9" y="12" width="6" height="1" fill="#000000"/></svg>
<svg style="left:242px;top:53px;opacity:1.0" width="16" height="15" shape-rendering="crispEdges"><rect x="0" y="0" width="15" height="1" fill="#808080"/><rect x="15" y="0" width="1" height="1" fill="#FFFFFF"/><rect x="0" y="1" width="1" height="1" fill="#808080"/><rect x="1" y="1" width="13" height="1" fill="#10A0F0"/><rect x="14" y="1" width="1" height="1" fill="#0078D7"/><rect x="15" y="1" width="1" height="1" fill="#FFFFFF"/><rect x="0" y="2" width="1" height="1" fill="#808080"/><rect x="1" y="2" width="15" height="1" fill="#FFFFFF"/><rect x="0" y="3" width="1" height="1" fill="#808080"/><rect x="1" y="3" width="1" height="1" fill="#FFFFFF"/><rect x="2" y="3" width="12" height="1" fill="#E4E4E4"/><rect x="14" y="3" width="2" height="1" fill="#FFFFFF"/><rect x="0" y="4" width="1" height="1" fill="#808080"/><rect x="1" y="4" width="1" height="1" fill="#FFFFFF"/><rect x="2" y="4" width="1" height="1" fill="#E4E4E4"/><rect x="3" y="4" width="3" height="1" fill="#FFFFFF"/><rect x="6" y="4" width="1" height="1" fill="#E4E4E4"/><rect x="7" y="4" width="3" height="1" fill="#FFFFFF"/><rect x="10" y="4" width="1" height="1" fill="#E4E4E4"/><rect x="11" y="4" width="5" height="1" fill="#FFFFFF"/><rect x="0" y="5" width="1" height="1" fill="#808080"/><rect x="1" y="5" width="1" height="1" fill="#FFFFFF"/><rect x="2" y="5" width="1" height="1" fill="#E4E4E4"/><rect x="3" y="5" width="3" height="1" fill="#FFFFFF"/><rect x="6" y="5" width="1" height="1" fill="#E4E4E4"/><rect x="7" y="5" width="3" height="1" fill="#FFFFFF"/><rect x="10" y="5" width="1" height="1" fill="#E4E4E4"/><rect x="11" y="5" width="5" height="1" fill="#FFFFFF"/><rect x="0" y="6" width="1" height="1" fill="#808080"/><rect x="1" y="6" width="1" height="1" fill="#FFFFFF"/><rect x="2" y="6" width="12" height="1" fill="#E4E4E4"/><rect x="14" y="6" width="2" height="1" fill="#FFFFFF"/><rect x="0" y="7" width="1" height="1" fill="#808080"/><rect x="1" y="7" width="1" height="1" fill="#FFFFFF"/><rect x="2" y="7" width="1" height="1" fill="#E4E4E4"/><rect x="3" y="7" width="3" height="1" fill="#FFFFFF"/><rect x="6" y="7" width="1" height="1" fill="#E4E4E4"/><rect x="7" y="7" width="3" height="1" fill="#FFFFFF"/><rect x="10" y="7" width="1" height="1" fill="#E4E4E4"/><rect x="11" y="7" width="5" height="1" fill="#FFFFFF"/><rect x="0" y="8" width="1" height="1" fill="#808080"/><rect x="1" y="8" width="1" height="1" fill="#FFFFFF"/><rect x="2" y="8" width="1" height="1" fill="#E4E4E4"/><rect x="3" y="8" width="3" height="1" fill="#FFFFFF"/><rect x="6" y="8" width="1" height="1" fill="#E4E4E4"/><rect x="7" y="8" width="3" height="1" fill="#FFFFFF"/><rect x="10" y="8" width="1" height="1" fill="#E4E4E4"/><rect x="11" y="8" width="5" height="1" fill="#FFFFFF"/><rect x="0" y="9" width="1" height="1" fill="#808080"/><rect x="1" y="9" width="1" height="1" fill="#FFFFFF"/><rect x="2" y="9" width="12" height="1" fill="#E4E4E4"/><rect x="14" y="9" width="2" height="1" fill="#FFFFFF"/><rect x="0" y="10" width="1" height="1" fill="#808080"/><rect x="1" y="10" width="1" height="1" fill="#FFFFFF"/><rect x="2" y="10" width="1" height="1" fill="#E4E4E4"/><rect x="3" y="10" width="3" height="1" fill="#FFFFFF"/><rect x="6" y="10" width="1" height="1" fill="#E4E4E4"/><rect x="7" y="10" width="3" height="1" fill="#FFFFFF"/><rect x="10" y="10" width="4" height="1" fill="#808080"/><rect x="14" y="10" width="2" height="1" fill="#FFFFFF"/><rect x="0" y="11" width="1" height="1" fill="#808080"/><rect x="1" y="11" width="1" height="1" fill="#FFFFFF"/><rect x="2" y="11" width="1" height="1" fill="#E4E4E4"/><rect x="3" y="11" width="3" height="1" fill="#FFFFFF"/><rect x="6" y="11" width="1" height="1" fill="#E4E4E4"/><rect x="7" y="11" width="3" height="1" fill="#FFFFFF"/><rect x="10" y="11" width="1" height="1" fill="#808080"/><rect x="11" y="11" width="2" height="1" fill="#FFFFFF"/><rect x="13" y="11" width="1" height="1" fill="#808080"/><rect x="14" y="11" width="1" height="1" fill="#FFFFFF"/><rect x="0" y="12" width="1" height="1" fill="#808080"/><rect x="1" y="12" width="1" height="1" fill="#FFFFFF"/><rect x="2" y="12" width="8" height="1" fill="#E4E4E4"/><rect x="10" y="12" width="1" height="1" fill="#808080"/><rect x="11" y="12" width="1" height="1" fill="#FFFFFF"/><rect x="12" y="12" width="1" height="1" fill="#808080"/><rect x="14" y="12" width="1" height="1" fill="#FFFFFF"/><rect x="0" y="13" width="1" height="1" fill="#808080"/><rect x="1" y="13" width="9" height="1" fill="#FFFFFF"/><rect x="10" y="13" width="2" height="1" fill="#808080"/><rect x="14" y="13" width="1" height="1" fill="#FFFFFF"/><rect x="0" y="14" width="11" height="1" fill="#808080"/><rect x="11" y="14" width="3" height="1" fill="#FFFFFF"/></svg>
<svg style="left:277px;top:54px;opacity:1.0" width="13" height="15" shape-rendering="crispEdges"><rect x="0" y="0" width="9" height="1" fill="#000000"/><rect x="0" y="1" width="1" height="1" fill="#000000"/><rect x="1" y="1" width="8" height="1" fill="#FFFFFF"/><rect x="9" y="1" width="1" height="1" fill="#000000"/><rect x="0" y="2" width="1" height="1" fill="#000000"/><rect x="1" y="2" width="1" height="1" fill="#FFFFFF"/><rect x="2" y="2" width="4" height="1" fill="#808080"/><rect x="6" y="2" width="1" height="1" fill="#FFFFFF"/><rect x="7" y="2" width="1" height="1" fill="#808080"/><rect x="8" y="2" width="1" height="1" fill="#FFFFFF"/><rect x="9" y="2" width="2" height="1" fill="#000000"/><rect x="0" y="3" width="1" height="1" fill="#000000"/><rect x="1" y="3" width="9" height="1" fill="#FFFFFF"/><rect x="10" y="3" width="1" height="1" fill="#000000"/><rect x="0" y="4" width="1" height="1" fill="#000000"/><rect x="1" y="4" width="1" height="1" fill="#FFFFFF"/><rect x="2" y="4" width="4" height="1" fill="#808080"/><rect x="6" y="4" width="1" height="1" fill="#FFFFFF"/><rect x="7" y="4" width="1" height="1" fill="#808080"/><rect x="8" y="4" width="2" height="1" fill="#FFFFFF"/><rect x="10" y="4" width="2" height="1" fill="#000000"/><rect x="0" y="5" width="1" height="1" fill="#000000"/><rect x="1" y="5" width="7" height="1" fill="#FFFFFF"/><rect x="8" y="5" width="4" height="1" fill="#000000"/><rect x="0" y="6" width="1" height="1" fill="#000000"/><rect x="1" y="6" width="1" height="1" fill="#FFFFFF"/><rect x="2" y="6" width="1" height="1" fill="#808080"/><rect x="3" y="6" width="1" height="1" fill="#FFFFFF"/><rect x="4" y="6" width="1" height="1" fill="#808080"/><rect x="5" y="6" width="1" height="1" fill="#FFFFFF"/><rect x="6" y="6" width="2" height="1" fill="#000000"/><rect x="8" y="6" width="3" height="1" fill="#C0C0C0"/><rect x="11" y="6" width="1" height="1" fill="#000000"/><rect x="0" y="7" width="1" height="1" fill="#000000"/><rect x="1" y="7" width="1" height="1" fill="#FFFFFF"/><rect x="2" y="7" width="1" height="1" fill="#808080"/><rect x="3" y="7" width="1" height="1" fill="#FFFFFF"/><rect x="4" y="7" width="1" height="1" fill="#808080"/><rect x="5" y="7" width="1" height="1" fill="#000000"/><rect x="6" y="7" width="2" height="1" fill="#C0C0C0"/><rect x="8" y="7" width="2" height="1" fill="#FFFFFF"/><rect x="10" y="7" width="2" height="1" fill="#C0C0C0"/><rect x="12" y="7" width="1" height="1" fill="#000000"/><rect x="0" y="8" width="1" height="1" fill="#000000"/><rect x="1" y="8" width="1" height="1" fill="#FFFFFF"/><rect x="2" y="8" width="1" height="1" fill="#808080"/><rect x="3" y="8" width="1" height="1" fill="#FFFFFF"/><rect x="4" y="8" width="1" height="1" fill="#808080"/><rect x="5" y="8" width="1" height="1" fill="#000000"/><rect x="6" y="8" width="1" height="1" fill="#C0C0C0"/><rect x="7" y="8" width="1" height="1" fill="#FFFFFF"/><rect x="8" y="8" width="4" height="1" fill="#C0C0C0"/><rect x="12" y="8" width="1" height="1" fill="#000000"/><rect x="0" y="9" width="1" height="1" fill="#000000"/><rect x="1" y="9" width="1" height="1" fill="#FFFFFF"/><rect x="2" y="9" width="1" height="1" fill="#808080"/><rect x="3" y="9" width="1" height="1" fill="#FFFFFF"/><rect x="4" y="9" width="1" height="1" fill="#808080"/><rect x="5" y="9" width="1" height="1" fill="#000000"/><rect x="6" y="9" width="1" height="1" fill="#C0C0C0"/><rect x="7" y="9" width="1" height="1" fill="#FFFFFF"/><rect x="8" y="9" width="4" height="1" fill="#C0C0C0"/><rect x="12" y="9" width="1" height="1" fill="#000000"/><rect x="0" y="10" width="1" height="1" fill="#000000"/><rect x="1" y="10" width="1" height="1" fill="#FFFFFF"/><rect x="2" y="10" width="1" height="1" fill="#808080"/><rect x="3" y="10" width="1" height="1" fill="#FFFFFF"/><rect x="4" y="10" width="1" height="1" fill="#808080"/><rect x="5" y="10" width="1" height="1" fill="#000000"/><rect x="6" y="10" width="5" height="1" fill="#C0C0C0"/><rect x="11" y="10" width="1" height="1" fill="#000000"/><rect x="0" y="11" width="1" height="1" fill="#000000"/><rect x="1" y="11" width="5" height="1" fill="#FFFFFF"/><rect x="6" y="11" width="5" height="1" fill="#000000"/><rect x="11" y="11" width="1" height="1" fill="#0000FF"/><rect x="0" y="12" width="1" height="1" fill="#000000"/><rect x="1" y="12" width="1" height="1" fill="#FFFFFF"/><rect x="2" y="12" width="4" height="1" fill="#808080"/><rect x="6" y="12" width="1" height="1" fill="#FFFFFF"/><rect x="7" y="12" width="1" height="1" fill="#808080"/><rect x="8" y="12" width="1" height="1" fill="#FFFFFF"/><rect x="9" y="12" width="1" height="1" fill="#000000"/><rect x="11" y="12" width="2" height="1" fill="#0000FF"/><rect x="0" y="13" width="1" height="1" fill="#000000"/><rect x="1" y="13" width="8" height="1" fill="#FFFFFF"/><rect x="9" y="13" width="1" height="1" fill="#000000"/><rect x="12" y="13" width="1" height="1" fill="#0000FF"/><rect x="0" y="14" width="10" height="1" fill="#000000"/></svg>
<svg style="left:632px;top:54px;opacity:1.0" width="13" height="16" shape-rendering="crispEdges"><rect x="0" y="0" width="9" height="1" fill="#808080"/><rect x="9" y="0" width="1" height="1" fill="#000000"/><rect x="0" y="1" width="1" height="1" fill="#808080"/><rect x="1" y="1" width="8" height="1" fill="#FFFFFF"/><rect x="9" y="1" width="2" height="1" fill="#000000"/><rect x="0" y="2" width="1" height="1" fill="#808080"/><rect x="1" y="2" width="1" height="1" fill="#FFFFFF"/><rect x="2" y="2" width="1" height="1" fill="#F0F080"/><rect x="3" y="2" width="1" height="1" fill="#FFFFFF"/><rect x="4" y="2" width="1" height="1" fill="#F0F080"/><rect x="5" y="2" width="1" height="1" fill="#FFFFFF"/><rect x="6" y="2" width="1" height="1" fill="#00A000"/><rect x="7" y="2" width="1" height="1" fill="#FFFFFF"/><rect x="8" y="2" width="1" height="1" fill="#F0F080"/><rect x="9" y="2" width="1" height="1" fill="#FFFFFF"/><rect x="10" y="2" width="2" height="1" fill="#000000"/><rect x="0" y="3" width="1" height="1" fill="#808080"/><rect x="1" y="3" width="2" height="1" fill="#FFFFFF"/><rect x="3" y="3" width="1" height="1" fill="#F0F080"/><rect x="4" y="3" width="2" height="1" fill="#FFFFFF"/><rect x="6" y="3" width="2" height="1" fill="#00A000"/><rect x="8" y="3" width="1" height="1" fill="#FFFFFF"/><rect x="9" y="3" width="1" height="1" fill="#F0F080"/><rect x="10" y="3" width="1" height="1" fill="#FFFFFF"/><rect x="11" y="3" width="1" height="1" fill="#000000"/><rect x="0" y="4" width="1" height="1" fill="#808080"/><rect x="1" y="4" width="1" height="1" fill="#FFFFFF"/><rect x="2" y="4" width="1" height="1" fill="#F0F080"/><rect x="3" y="4" width="6" height="1" fill="#00A000"/><rect x="9" y="4" width="1" height="1" fill="#FFFFFF"/><rect x="10" y="4" width="1" height="1" fill="#F0F080"/><rect x="11" y="4" width="1" height="1" fill="#000000"/><rect x="0" y="5" width="1" height="1" fill="#808080"/><rect x="1" y="5" width="1" height="1" fill="#FFFFFF"/><rect x="2" y="5" width="8" height="1" fill="#00A000"/><rect x="10" y="5" width="1" height="1" fill="#FFFFFF"/><rect x="11" y="5" width="1" height="1" fill="#000000"/><rect x="0" y="6" width="1" height="1" fill="#808080"/><rect x="1" y="6" width="1" height="1" fill="#F0F080"/><rect x="2" y="6" width="1" height="1" fill="#0078D7"/><rect x="3" y="6" width="1" height="1" fill="#FFFFFF"/><rect x="4" y="6" width="1" height="1" fill="#F0F080"/><rect x="5" y="6" width="1" height="1" fill="#FFFFFF"/><rect x="6" y="6" width="2" height="1" fill="#00A000"/><rect x="8" y="6" width="1" height="1" fill="#F0F080"/><rect x="9" y="6" width="1" height="1" fill="#0078D7"/><rect x="10" y="6" width="1" height="1" fill="#FFFFFF"/><rect x="11" y="6" width="1" height="1" fill="#000000"/><rect x="0" y="7" width="1" height="1" fill="#808080"/><rect x="1" y="7" width="1" height="1" fill="#FFFFFF"/><rect x="2" y="7" width="1" height="1" fill="#0078D7"/><rect x="3" y="7" width="2" height="1" fill="#FFFFFF"/><rect x="5" y="7" width="1" height="1" fill="#F0F080"/><rect x="6" y="7" width="1" height="1" fill="#00A000"/><rect x="7" y="7" width="1" height="1" fill="#FFFFFF"/><rect x="8" y="7" width="1" height="1" fill="#F0F080"/><rect x="9" y="7" width="1" height="1" fill="#0078D7"/><rect x="10" y="7" width="1" height="1" fill="#F0F080"/><rect x="11" y="7" width="1" height="1" fill="#000000"/><rect x="0" y="8" width="1" height="1" fill="#808080"/><rect x="1" y="8" width="1" height="1" fill="#F0F080"/><rect x="2" y="8" width="1" height="1" fill="#0078D7"/><rect x="3" y="8" width="1" height="1" fill="#F0F080"/><rect x="4" y="8" width="1" height="1" fill="#FFFFFF"/><rect x="5" y="8" width="1" height="1" fill="#00A000"/><rect x="6" y="8" width="1" height="1" fill="#FFFFFF"/><rect x="7" y="8" width="1" height="1" fill="#F0F080"/><rect x="8" y="8" width="1" height="1" fill="#FFFFFF"/><rect x="9" y="8" width="1" height="1" fill="#0078D7"/><rect x="10" y="8" width="1" height="1" fill="#FFFFFF"/><rect x="11" y="8" width="1" height="1" fill="#000000"/><rect x="0" y="9" width="1" height="1" fill="#808080"/><rect x="1" y="9" width="1" height="1" fill="#FFFFFF"/><rect x="2" y="9" width="1" height="1" fill="#0078D7"/><rect x="3" y="9" width="1" height="1" fill="#FFFFFF"/><rect x="4" y="9" width="2" height="1" fill="#00A000"/><rect x="6" y="9" width="1" height="1" fill="#FFFFFF"/><rect x="7" y="9" width="1" height="1" fill="#F0F080"/><rect x="8" y="9" width="1" height="1" fill="#FFFFFF"/><rect x="9" y="9" width="1" height="1" fill="#0078D7"/><rect x="10" y="9" width="1" height="1" fill="#F0F080"/><rect x="11" y="9" width="1" height="1" fill="#000000"/><rect x="0" y="10" width="1" height="1" fill="#808080"/><rect x="1" y="10" width="1" height="1" fill="#F0F080"/><rect x="2" y="10" width="8" height="1" fill="#00A000"/><rect x="10" y="10" width="1" height="1" fill="#FFFFFF"/><rect x="11" y="10" width="1" height="1" fill="#000000"/><rect x="0" y="11" width="1" height="1" fill="#808080"/><rect x="1" y="11" width="2" height="1" fill="#FFFFFF"/><rect x="3" y="11" width="6" height="1" fill="#00A000"/><rect x="9" y="11" width="1" height="1" fill="#F0F080"/><rect x="10" y="11" width="1" height="1" fill="#FFFFFF"/><rect x="11" y="11" width="1" height="1" fill="#000000"/><rect x="0" y="12" width="1" height="1" fill="#808080"/><rect x="1" y="12" width="1" height="1" fill="#FFFFFF"/><rect x="2" y="12" width="1" height="1" fill="#F0F080"/><rect x="3" y="12" width="1" height="1" fill="#FFFFFF"/><rect x="4" y="12" width="2" height="1" fill="#00A000"/><rect x="6" y="12" width="1" height="1" fill="#FFFFFF"/><rect x="7" y="12" width="1" height="1" fill="#F0F080"/><rect x="8" y="12" width="1" height="1" fill="#FFFFFF"/><rect x="9" y="12" width="1" height="1" fill="#F0F080"/><rect x="10" y="12" width="1" height="1" fill="#FFFFFF"/><rect x="11" y="12" width="1" height="1" fill="#000000"/><rect x="0" y="13" width="1" height="1" fill="#808080"/><rect x="1" y="13" width="2" height="1" fill="#FFFFFF"/><rect x="3" y="13" width="1" height="1" fill="#F0F080"/><rect x="4" y="13" width="1" height="1" fill="#FFFFFF"/><rect x="5" y="13" width="1" height="1" fill="#00A000"/><rect x="6" y="13" width="1" height="1" fill="#F0F080"/><rect x="7" y="13" width="1" height="1" fill="#FFFFFF"/><rect x="8" y="13" width="1" height="1" fill="#F0F080"/><rect x="9" y="13" width="2" height="1" fill="#FFFFFF"/><rect x="11" y="13" width="1" height="1" fill="#000000"/><rect x="0" y="14" width="1" height="1" fill="#808080"/><rect x="1" y="14" width="1" height="1" fill="#FFFFFF"/><rect x="2" y="14" width="1" height="1" fill="#F0F080"/><rect x="3" y="14" width="1" height="1" fill="#FFFFFF"/><rect x="4" y="14" width="1" height="1" fill="#F0F080"/><rect x="5" y="14" width="1" height="1" fill="#FFFFFF"/><rect x="6" y="14" width="1" height="1" fill="#F0F080"/><rect x="7" y="14" width="1" height="1" fill="#FFFFFF"/><rect x="8" y="14" width="1" height="1" fill="#F0F080"/><rect x="9" y="14" width="2" height="1" fill="#FFFFFF"/><rect x="11" y="14" width="1" height="1" fill="#000000"/><rect x="0" y="15" width="12" height="1" fill="#000000"/></svg>
<svg style="left:776px;top:512px;opacity:1.0" width="16" height="16" shape-rendering="crispEdges"><rect x="5" y="0" width="11" height="1" fill="#000000"/><rect x="5" y="1" width="1" height="1" fill="#000000"/><rect x="6" y="1" width="5" height="1" fill="#FFFF00"/><rect x="11" y="1" width="5" height="1" fill="#000000"/><rect x="5" y="2" width="1" height="1" fill="#000000"/><rect x="6" y="2" width="2" height="1" fill="#FFFF00"/><rect x="8" y="2" width="1" height="1" fill="#000000"/><rect x="9" y="2" width="1" height="1" fill="#FFFFFF"/><rect x="10" y="2" width="5" height="1" fill="#808000"/><rect x="15" y="2" width="1" height="1" fill="#000000"/><rect x="5" y="3" width="1" height="1" fill="#000000"/><rect x="6" y="3" width="2" height="1" fill="#FFFF00"/><rect x="8" y="3" width="1" height="1" fill="#000000"/><rect x="9" y="3" width="1" height="1" fill="#FFFFFF"/><rect x="10" y="3" width="1" height="1" fill="#808000"/><rect x="11" y="3" width="1" height="1" fill="#808080"/><rect x="12" y="3" width="1" height="1" fill="#808000"/><rect x="13" y="3" width="1" height="1" fill="#808080"/><rect x="14" y="3" width="1" height="1" fill="#808000"/><rect x="15" y="3" width="1" height="1" fill="#000000"/><rect x="5" y="4" width="1" height="1" fill="#000000"/><rect x="6" y="4" width="2" height="1" fill="#FFFF00"/><rect x="8" y="4" width="1" height="1" fill="#000000"/><rect x="9" y="4" width="1" height="1" fill="#FFFFFF"/><rect x="10" y="4" width="1" height="1" fill="#808080"/><rect x="11" y="4" width="1" height="1" fill="#808000"/><rect x="12" y="4" width="1" height="1" fill="#808080"/><rect x="13" y="4" width="1" height="1" fill="#808000"/><rect x="14" y="4" width="1" height="1" fill="#808080"/><rect x="15" y="4" width="1" height="1" fill="#000000"/><rect x="5" y="5" width="1" height="1" fill="#000000"/><rect x="6" y="5" width="2" height="1" fill="#FFFF00"/><rect x="8" y="5" width="1" height="1" fill="#000000"/><rect x="9" y="5" width="1" height="1" fill="#FFFFFF"/><rect x="10" y="5" width="1" height="1" fill="#808000"/><rect x="11" y="5" width="1" height="1" fill="#808080"/><rect x="12" y="5" width="1" height="1" fill="#808000"/><rect x="13" y="5" width="1" height="1" fill="#808080"/><rect x="14" y="5" width="1" height="1" fill="#808000"/><rect x="15" y="5" width="1" height="1" fill="#000000"/><rect x="5" y="6" width="1" height="1" fill="#000000"/><rect x="6" y="6" width="2" height="1" fill="#FFFF00"/><rect x="8" y="6" width="1" height="1" fill="#000000"/><rect x="9" y="6" width="1" height="1" fill="#FFFFFF"/><rect x="10" y="6" width="1" height="1" fill="#808080"/><rect x="11" y="6" width="1" height="1" fill="#808000"/><rect x="12" y="6" width="1" height="1" fill="#808080"/><rect x="13" y="6" width="1" height="1" fill="#808000"/><rect x="14" y="6" width="1" height="1" fill="#808080"/><rect x="15" y="6" width="1" height="1" fill="#000000"/><rect x="5" y="7" width="1" height="1" fill="#000000"/><rect x="6" y="7" width="2" height="1" fill="#FFFF00"/><rect x="8" y="7" width="1" height="1" fill="#000000"/><rect x="9" y="7" width="1" height="1" fill="#FFFFFF"/><rect x="10" y="7" width="1" height="1" fill="#808000"/><rect x="11" y="7" width="1" height="1" fill="#808080"/><rect x="12" y="7" width="1" height="1" fill="#808000"/><rect x="13" y="7" width="1" height="1" fill="#808080"/><rect x="14" y="7" width="1" height="1" fill="#808000"/><rect x="15" y="7" width="1" height="1" fill="#000000"/><rect x="5" y="8" width="1" height="1" fill="#000000"/><rect x="6" y="8" width="2" height="1" fill="#FFFF00"/><rect x="8" y="8" width="1" height="1" fill="#000000"/><rect x="9" y="8" width="1" height="1" fill="#FFFFFF"/><rect x="10" y="8" width="2" height="1" fill="#000000"/><rect x="12" y="8" width="1" height="1" fill="#808000"/><rect x="13" y="8" width="1" height="1" fill="#808080"/><rect x="14" y="8" width="1" height="1" fill="#808000"/><rect x="15" y="8" width="1" height="1" fill="#000000"/><rect x="5" y="9" width="1" height="1" fill="#000000"/><rect x="6" y="9" width="2" height="1" fill="#FFFF00"/><rect x="8" y="9" width="1" height="1" fill="#000000"/><rect x="9" y="9" width="1" height="1" fill="#FFFFFF"/><rect x="10" y="9" width="1" height="1" fill="#808000"/><rect x="11" y="9" width="1" height="1" fill="#808080"/><rect x="12" y="9" width="1" height="1" fill="#808000"/><rect x="13" y="9" width="1" height="1" fill="#808080"/><rect x="14" y="9" width="1" height="1" fill="#808000"/><rect x="15" y="9" width="1" height="1" fill="#000000"/><rect x="5" y="10" width="1" height="1" fill="#000000"/><rect x="6" y="10" width="2" height="1" fill="#FFFF00"/><rect x="8" y="10" width="1" height="1" fill="#000000"/><rect x="9" y="10" width="1" height="1" fill="#FFFFFF"/><rect x="10" y="10" width="1" height="1" fill="#808080"/><rect x="11" y="10" width="1" height="1" fill="#808000"/><rect x="12" y="10" width="1" height="1" fill="#808080"/><rect x="13" y="10" width="1" height="1" fill="#808000"/><rect x="14" y="10" width="1" height="1" fill="#808080"/><rect x="15" y="10" width="1" height="1" fill="#000000"/><rect x="5" y="11" width="1" height="1" fill="#000000"/><rect x="6" y="11" width="2" height="1" fill="#FFFF00"/><rect x="8" y="11" width="1" height="1" fill="#000000"/><rect x="9" y="11" width="1" height="1" fill="#FFFFFF"/><rect x="10" y="11" width="1" height="1" fill="#808000"/><rect x="11" y="11" width="1" height="1" fill="#808080"/><rect x="12" y="11" width="1" height="1" fill="#808000"/><rect x="13" y="11" width="1" height="1" fill="#808080"/><rect x="14" y="11" width="1" height="1" fill="#808000"/><rect x="15" y="11" width="1" height="1" fill="#000000"/><rect x="0" y="12" width="6" height="1" fill="#000000"/><rect x="6" y="12" width="2" height="1" fill="#FFFF00"/><rect x="8" y="12" width="1" height="1" fill="#000000"/><rect x="9" y="12" width="1" height="1" fill="#FFFFFF"/><rect x="10" y="12" width="1" height="1" fill="#808080"/><rect x="11" y="12" width="1" height="1" fill="#808000"/><rect x="12" y="12" width="1" height="1" fill="#808080"/><rect x="13" y="12" width="1" height="1" fill="#808000"/><rect x="14" y="12" width="2" height="1" fill="#000000"/><rect x="0" y="13" width="1" height="1" fill="#808000"/><rect x="2" y="13" width="1" height="1" fill="#808000"/><rect x="4" y="13" width="1" height="1" fill="#808000"/><rect x="6" y="13" width="1" height="1" fill="#808000"/><rect x="7" y="13" width="1" height="1" fill="#000000"/><rect x="8" y="13" width="2" height="1" fill="#FFFFFF"/><rect x="10" y="13" width="1" height="1" fill="#808000"/><rect x="11" y="13" width="1" height="1" fill="#808080"/><rect x="12" y="13" width="1" height="1" fill="#808000"/><rect x="13" y="13" width="1" height="1" fill="#000000"/><rect x="14" y="13" width="1" height="1" fill="#808000"/><rect x="1" y="14" width="1" height="1" fill="#808000"/><rect x="3" y="14" width="1" height="1" fill="#808000"/><rect x="5" y="14" width="1" height="1" fill="#808000"/><rect x="7" y="14" width="1" height="1" fill="#000000"/><rect x="8" y="14" width="2" height="1" fill="#FFFFFF"/><rect x="10" y="14" width="1" height="1" fill="#808080"/><rect x="11" y="14" width="1" height="1" fill="#808000"/><rect x="12" y="14" width="1" height="1" fill="#000000"/><rect x="13" y="14" width="1" height="1" fill="#808000"/><rect x="15" y="14" width="1" height="1" fill="#808000"/><rect x="0" y="15" width="1" height="1" fill="#808000"/><rect x="2" y="15" width="1" height="1" fill="#808000"/><rect x="4" y="15" width="1" height="1" fill="#808000"/><rect x="6" y="15" width="1" height="1" fill="#808000"/><rect x="7" y="15" width="4" height="1" fill="#000000"/><rect x="11" y="15" width="1" height="1" fill="#808000"/><rect x="12" y="15" width="1" height="1" fill="#000000"/><rect x="13" y="15" width="1" height="1" fill="#808000"/><rect x="15" y="15" width="1" height="1" fill="#808000"/></svg>
<svg style="left:534px;top:84px;opacity:1.0" width="17" height="16" shape-rendering="crispEdges"><rect x="0" y="0" width="4" height="1" fill="#808080"/><rect x="5" y="0" width="1" height="1" fill="#808080"/><rect x="6" y="0" width="1" height="1" fill="#FFFFFF"/><rect x="8" y="0" width="4" height="1" fill="#808080"/><rect x="0" y="1" width="2" height="1" fill="#808080"/><rect x="2" y="1" width="1" height="1" fill="#FFFFFF"/><rect x="3" y="1" width="1" height="1" fill="#808080"/><rect x="4" y="1" width="1" height="1" fill="#FFFFFF"/><rect x="5" y="1" width="1" height="1" fill="#808080"/><rect x="6" y="1" width="1" height="1" fill="#FFFFFF"/><rect x="7" y="1" width="1" height="1" fill="#808080"/><rect x="8" y="1" width="1" height="1" fill="#FFFFFF"/><rect x="11" y="1" width="3" height="1" fill="#808080"/><rect x="0" y="2" width="1" height="1" fill="#808080"/><rect x="1" y="2" width="1" height="1" fill="#FFFFFF"/><rect x="2" y="2" width="1" height="1" fill="#808080"/><rect x="3" y="2" width="1" height="1" fill="#FFFFFF"/><rect x="4" y="2" width="1" height="1" fill="#808080"/><rect x="5" y="2" width="1" height="1" fill="#FFFFFF"/><rect x="6" y="2" width="1" height="1" fill="#808080"/><rect x="7" y="2" width="1" height="1" fill="#FFFFFF"/><rect x="8" y="2" width="1" height="1" fill="#808080"/><rect x="9" y="2" width="1" height="1" fill="#FFFFFF"/><rect x="11" y="2" width="2" height="1" fill="#FFFFFF"/><rect x="13" y="2" width="2" height="1" fill="#808080"/><rect x="1" y="3" width="1" height="1" fill="#808080"/><rect x="2" y="3" width="1" height="1" fill="#FFFFFF"/><rect x="3" y="3" width="1" height="1" fill="#808080"/><rect x="4" y="3" width="1" height="1" fill="#FFFFFF"/><rect x="5" y="3" width="1" height="1" fill="#808080"/><rect x="6" y="3" width="1" height="1" fill="#FFFFFF"/><rect x="7" y="3" width="1" height="1" fill="#808080"/><rect x="8" y="3" width="1" height="1" fill="#FFFFFF"/><rect x="9" y="3" width="1" height="1" fill="#808080"/><rect x="10" y="3" width="4" height="1" fill="#FFFFFF"/><rect x="14" y="3" width="2" height="1" fill="#808080"/><rect x="2" y="4" width="1" height="1" fill="#FFFFFF"/><rect x="3" y="4" width="1" height="1" fill="#808080"/><rect x="4" y="4" width="1" height="1" fill="#FFFFFF"/><rect x="5" y="4" width="1" height="1" fill="#808080"/><rect x="6" y="4" width="1" height="1" fill="#FFFFFF"/><rect x="7" y="4" width="1" height="1" fill="#808080"/><rect x="8" y="4" width="1" height="1" fill="#FFFFFF"/><rect x="9" y="4" width="1" height="1" fill="#808080"/><rect x="10" y="4" width="5" height="1" fill="#FFFFFF"/><rect x="15" y="4" width="1" height="1" fill="#808080"/><rect x="3" y="5" width="1" height="1" fill="#FFFFFF"/><rect x="4" y="5" width="1" height="1" fill="#808080"/><rect x="5" y="5" width="1" height="1" fill="#FFFFFF"/><rect x="6" y="5" width="1" height="1" fill="#808080"/><rect x="7" y="5" width="1" height="1" fill="#FFFFFF"/><rect x="8" y="5" width="1" height="1" fill="#808080"/><rect x="9" y="5" width="1" height="1" fill="#FFFFFF"/><rect x="10" y="5" width="1" height="1" fill="#808080"/><rect x="11" y="5" width="2" height="1" fill="#FFFFFF"/><rect x="13" y="5" width="1" height="1" fill="#808080"/><rect x="14" y="5" width="1" height="1" fill="#FFFFFF"/><rect x="15" y="5" width="1" height="1" fill="#808080"/><rect x="4" y="6" width="1" height="1" fill="#FFFFFF"/><rect x="5" y="6" width="1" height="1" fill="#808080"/><rect x="6" y="6" width="1" height="1" fill="#FFFFFF"/><rect x="7" y="6" width="1" height="1" fill="#808080"/><rect x="8" y="6" width="1" height="1" fill="#FFFFFF"/><rect x="9" y="6" width="1" height="1" fill="#808080"/><rect x="10" y="6" width="1" height="1" fill="#FFFFFF"/><rect x="11" y="6" width="1" height="1" fill="#808080"/><rect x="12" y="6" width="3" height="1" fill="#FFFFFF"/><rect x="15" y="6" width="1" height="1" fill="#808080"/><rect x="5" y="7" width="1" height="1" fill="#FFFFFF"/><rect x="6" y="7" width="1" height="1" fill="#808080"/><rect x="7" y="7" width="1" height="1" fill="#FFFFFF"/><rect x="8" y="7" width="1" height="1" fill="#808080"/><rect x="9" y="7" width="1" height="1" fill="#FFFFFF"/><rect x="10" y="7" width="1" height="1" fill="#808080"/><rect x="11" y="7" width="2" height="1" fill="#FFFFFF"/><rect x="13" y="7" width="1" height="1" fill="#808080"/><rect x="14" y="7" width="1" height="1" fill="#FFFFFF"/><rect x="15" y="7" width="1" height="1" fill="#808080"/><rect x="4" y="8" width="1" height="1" fill="#808080"/><rect x="5" y="8" width="2" height="1" fill="#FFFFFF"/><rect x="7" y="8" width="1" height="1" fill="#808080"/><rect x="8" y="8" width="1" height="1" fill="#FFFFFF"/><rect x="9" y="8" width="1" height="1" fill="#808080"/><rect x="10" y="8" width="1" height="1" fill="#FFFFFF"/><rect x="11" y="8" width="1" height="1" fill="#808080"/><rect x="12" y="8" width="3" height="1" fill="#FFFFFF"/><rect x="15" y="8" width="1" height="1" fill="#808080"/><rect x="4" y="9" width="1" height="1" fill="#808080"/><rect x="5" y="9" width="3" height="1" fill="#FFFFFF"/><rect x="8" y="9" width="1" height="1" fill="#808080"/><rect x="9" y="9" width="1" height="1" fill="#FFFFFF"/><rect x="10" y="9" width="1" height="1" fill="#808080"/><rect x="11" y="9" width="2" height="1" fill="#FFFFFF"/><rect x="13" y="9" width="1" height="1" fill="#808080"/><rect x="14" y="9" width="1" height="1" fill="#FFFFFF"/><rect x="15" y="9" width="1" height="1" fill="#808080"/><rect x="4" y="10" width="1" height="1" fill="#808080"/><rect x="5" y="10" width="10" height="1" fill="#FFFFFF"/><rect x="15" y="10" width="1" height="1" fill="#808080"/><rect x="4" y="11" width="1" height="1" fill="#808080"/><rect x="5" y="11" width="1" height="1" fill="#FFFFFF"/><rect x="6" y="11" width="1" height="1" fill="#808080"/><rect x="7" y="11" width="1" height="1" fill="#FFFFFF"/><rect x="8" y="11" width="1" height="1" fill="#808080"/><rect x="9" y="11" width="1" height="1" fill="#FFFFFF"/><rect x="10" y="11" width="1" height="1" fill="#808080"/><rect x="11" y="11" width="1" height="1" fill="#FFFFFF"/><rect x="12" y="11" width="1" height="1" fill="#808080"/><rect x="13" y="11" width="1" height="1" fill="#FFFFFF"/><rect x="14" y="11" width="2" height="1" fill="#808080"/><rect x="4" y="12" width="1" height="1" fill="#808080"/><rect x="5" y="12" width="10" height="1" fill="#FFFFFF"/><rect x="15" y="12" width="1" height="1" fill="#808080"/><rect x="4" y="13" width="1" height="1" fill="#808080"/><rect x="5" y="13" width="1" height="1" fill="#FFFFFF"/><rect x="6" y="13" width="1" height="1" fill="#808080"/><rect x="7" y="13" width="1" height="1" fill="#FFFFFF"/><rect x="8" y="13" width="1" height="1" fill="#808080"/><rect x="9" y="13" width="1" height="1" fill="#FFFFFF"/><rect x="10" y="13" width="1" height="1" fill="#808080"/><rect x="11" y="13" width="1" height="1" fill="#FFFFFF"/><rect x="12" y="13" width="1" height="1" fill="#808080"/><rect x="13" y="13" width="1" height="1" fill="#FFFFFF"/><rect x="14" y="13" width="2" height="1" fill="#808080"/><rect x="4" y="14" width="1" height="1" fill="#808080"/><rect x="5" y="14" width="10" height="1" fill="#FFFFFF"/><rect x="15" y="14" width="1" height="1" fill="#808080"/><rect x="4" y="15" width="13" height="1" fill="#808080"/></svg>
<div class="a" style="left:818px;top:120px;width:1px;height:6px;background:#6A5A88;"></div>
<svg style="left:0;top:0" width="842" height="539"><path d="M124.5 82.5 L127.5 79.5 L143.5 79.5 L143.5 77.5 L162.5 77.5 L162.5 76.5 L333 76.5 L333 77.5 L389 77.5 L389 78.5 L444 78.5 L444 79.5 L501 79.5 L501 80.5 L527.5 80.5 L530.5 83.5 L530.5 100 L527.5 103 L520 103 L520 104.5 L509 104.5 L509 106 L485 106 L485 107.5 L162.5 107.5 L162.5 106.5 L145.5 106.5 L145.5 105 L134 105 L134 103 L127.5 103 L124.5 100 Z" fill="none" stroke="#880015" stroke-width="5" stroke-linejoin="miter"/></svg>
</body></html>
